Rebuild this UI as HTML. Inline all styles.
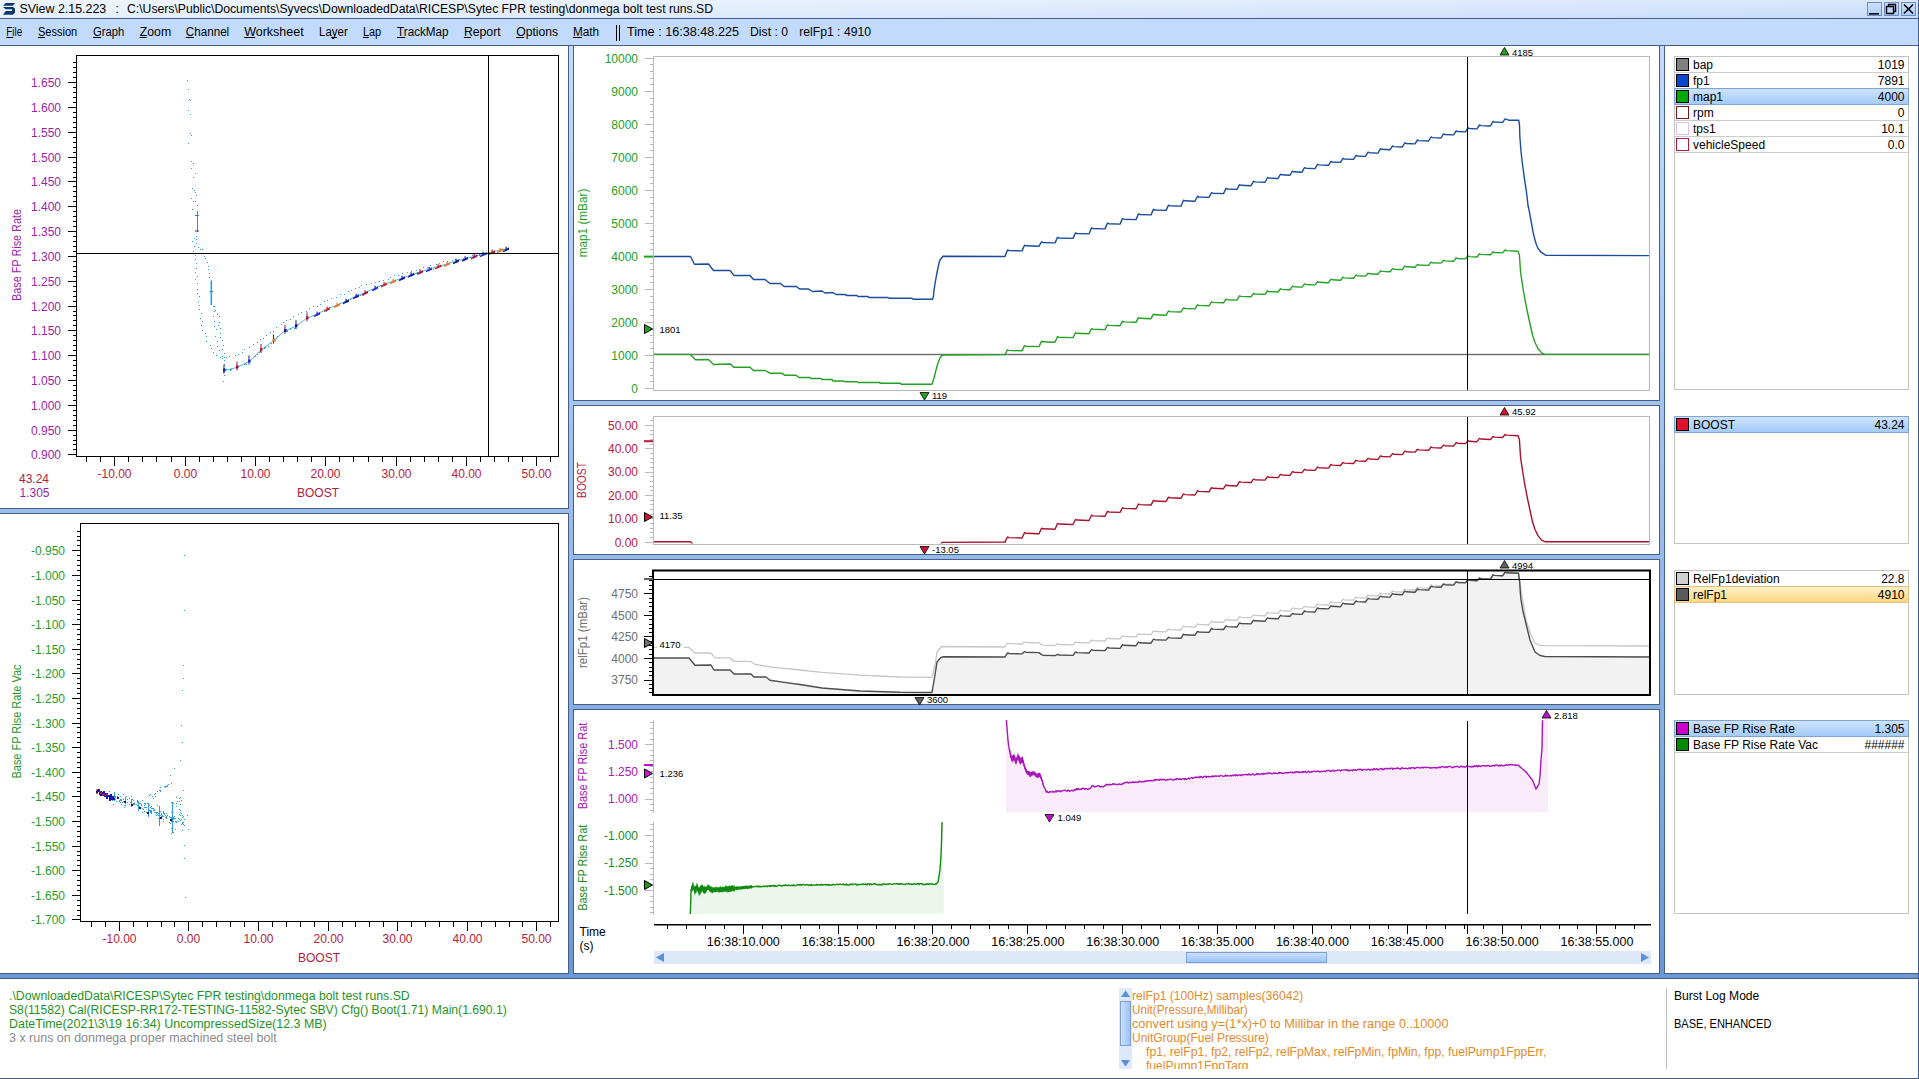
<!DOCTYPE html>
<html><head><meta charset="utf-8"><title>SView</title>
<style>
html,body{margin:0;padding:0;}
body{width:1919px;height:1079px;overflow:hidden;position:relative;
 background:linear-gradient(to bottom,#c6defd 0px,#c2dbfc 45px,#a4c4f0 400px,#88b0e2 706px,#6a98d5 978px,#6898d4 1079px);
 font-family:"Liberation Sans",sans-serif;font-size:12px;color:#000;}
.abs{position:absolute;}
.panel{position:absolute;background:#fff;border:1px solid #475d88;box-sizing:border-box;}
svg{position:absolute;left:0;top:0;overflow:hidden;}
svg text{font-family:"Liberation Sans",sans-serif;}
</style></head><body>

<div class="abs" style="left:0;top:0;width:1919px;height:18px;background:linear-gradient(to bottom,rgba(255,255,255,0.35),rgba(255,255,255,0)),linear-gradient(to right,#e6f0fd 0%,#dde9fc 40%,#c7dcfb 100%);"></div>
<div class="abs" style="left:0;top:18px;width:1919px;height:1px;background:#475d88;"></div>
<div class="abs" style="left:0;top:19px;width:1919px;height:26px;background:#c2dbfc;"></div>
<div class="abs" style="left:0;top:45px;width:1919px;height:1px;background:#475d88;"></div>
<div class="panel" style="left:-1px;top:45px;width:570px;height:464px;"></div>
<div class="panel" style="left:-1px;top:513px;width:570px;height:461px;"></div>
<div class="panel" style="left:573px;top:45px;width:1087px;height:356px;"></div>
<div class="panel" style="left:573px;top:405px;width:1087px;height:150px;"></div>
<div class="panel" style="left:573px;top:559px;width:1087px;height:146px;"></div>
<div class="panel" style="left:573px;top:709px;width:1087px;height:265px;"></div>
<div class="panel" style="left:1664px;top:45px;width:255px;height:929px;"></div>
<div class="panel" style="left:-1px;top:978px;width:1920px;height:101px;"></div>
<div class="abs" style="left:1918px;top:0;width:1px;height:1079px;background:#475d88;"></div>
<svg width="1919" height="1079" viewBox="0 0 1919 1079">
<path d="M3,5.8 L5.8,3 L15,3 L12.8,5.8 Z M3,6.9 L13,6.9 L15,8.6 L15,12.8 L12.8,14.7 L3,14.7 L5.8,10.9 L12,10.9 L12,9.2 L5.6,9.2 Z" fill="#0b3868"/>
<text x="19.5" y="13" fill="#000" font-size="12" text-anchor="start" textLength="86.7" lengthAdjust="spacingAndGlyphs">SView 2.15.223</text>
<text x="115.5" y="13" fill="#000" font-size="12" text-anchor="start" >:</text>
<text x="127" y="13" fill="#000" font-size="12" text-anchor="start" textLength="586" lengthAdjust="spacingAndGlyphs">C:\Users\Public\Documents\Syvecs\DownloadedData\RICESP\Sytec FPR testing\donmega bolt test runs.SD</text>
<text x="6.3" y="36" fill="#000" font-size="12" text-anchor="start" textLength="15.9" lengthAdjust="spacingAndGlyphs">File</text>
<rect x="6.3" y="37" width="7" height="1" fill="#000" />
<text x="38" y="36" fill="#000" font-size="12" text-anchor="start" textLength="39.2" lengthAdjust="spacingAndGlyphs">Session</text>
<rect x="38" y="37" width="7" height="1" fill="#000" />
<text x="93" y="36" fill="#000" font-size="12" text-anchor="start" textLength="31.2" lengthAdjust="spacingAndGlyphs">Graph</text>
<rect x="93" y="37" width="8" height="1" fill="#000" />
<text x="139.7" y="36" fill="#000" font-size="12" text-anchor="start" textLength="31.5" lengthAdjust="spacingAndGlyphs">Zoom</text>
<rect x="139.7" y="37" width="7" height="1" fill="#000" />
<text x="185.8" y="36" fill="#000" font-size="12" text-anchor="start" textLength="43.4" lengthAdjust="spacingAndGlyphs">Channel</text>
<rect x="185.8" y="37" width="8" height="1" fill="#000" />
<text x="244.2" y="36" fill="#000" font-size="12" text-anchor="start" textLength="59.5" lengthAdjust="spacingAndGlyphs">Worksheet</text>
<rect x="244.2" y="37" width="11" height="1" fill="#000" />
<text x="319.1" y="36" fill="#000" font-size="12" text-anchor="start" textLength="28.7" lengthAdjust="spacingAndGlyphs">Layer</text>
<rect x="331.1" y="37" width="6" height="1" fill="#000" />
<text x="362.9" y="36" fill="#000" font-size="12" text-anchor="start" textLength="18.2" lengthAdjust="spacingAndGlyphs">Lap</text>
<rect x="362.9" y="37" width="6" height="1" fill="#000" />
<text x="397.1" y="36" fill="#000" font-size="12" text-anchor="start" textLength="51.4" lengthAdjust="spacingAndGlyphs">TrackMap</text>
<rect x="397.1" y="37" width="8" height="1" fill="#000" />
<text x="463.9" y="36" fill="#000" font-size="12" text-anchor="start" textLength="36.8" lengthAdjust="spacingAndGlyphs">Report</text>
<rect x="463.9" y="37" width="7" height="1" fill="#000" />
<text x="516.2" y="36" fill="#000" font-size="12" text-anchor="start" textLength="42" lengthAdjust="spacingAndGlyphs">Options</text>
<rect x="516.2" y="37" width="8" height="1" fill="#000" />
<text x="572.9" y="36" fill="#000" font-size="12" text-anchor="start" textLength="26.2" lengthAdjust="spacingAndGlyphs">Math</text>
<rect x="572.9" y="37" width="9" height="1" fill="#000" />
<rect x="616" y="25" width="1" height="16" fill="#000" />
<rect x="619" y="25" width="1" height="16" fill="#000" />
<text x="627" y="36" fill="#000" font-size="12" text-anchor="start" textLength="112" lengthAdjust="spacingAndGlyphs">Time : 16:38:48.225</text>
<text x="750" y="36" fill="#000" font-size="12" text-anchor="start" textLength="38" lengthAdjust="spacingAndGlyphs">Dist : 0</text>
<text x="799.2" y="36" fill="#000" font-size="12" text-anchor="start" textLength="71.8" lengthAdjust="spacingAndGlyphs">relFp1 : 4910</text>
<rect x="1867.5" y="2.5" width="14" height="13" fill="url(#btng)" stroke="#6f8fc4" stroke-width="1"/>
<rect x="1884.5" y="2.5" width="14" height="13" fill="url(#btng)" stroke="#6f8fc4" stroke-width="1"/>
<rect x="1901.5" y="2.5" width="14" height="13" fill="url(#btng)" stroke="#6f8fc4" stroke-width="1"/>
<defs><linearGradient id="btng" x1="0" y1="0" x2="0" y2="1"><stop offset="0" stop-color="#cfe2fb"/><stop offset="1" stop-color="#a9ccf8"/></linearGradient></defs>
<rect x="1869" y="13" width="10" height="1.6" fill="#000" />
<path d="M1888.5,4.5 h7 v7 h-7 z" fill="none" stroke="#000" stroke-width="1.4"/><path d="M1886.5,6.5 h7 v7 h-7 z" fill="#bcd6fa" stroke="#000" stroke-width="1.4"/>
<path d="M1904,4.5 L1913,13.5 M1913,4.5 L1904,13.5" stroke="#000" stroke-width="1.6"/>
<rect x="76.5" y="55.5" width="482" height="401" fill="none" stroke="#000" stroke-width="1"/>
<rect x="68" y="454" width="8" height="1" fill="#000" />
<text x="61" y="458.5" fill="#9c1fa8" font-size="12" text-anchor="end" >0.900</text>
<rect x="68" y="430" width="8" height="1" fill="#000" />
<text x="61" y="434.5" fill="#9c1fa8" font-size="12" text-anchor="end" >0.950</text>
<rect x="68" y="405" width="8" height="1" fill="#000" />
<text x="61" y="409.5" fill="#9c1fa8" font-size="12" text-anchor="end" >1.000</text>
<rect x="68" y="380" width="8" height="1" fill="#000" />
<text x="61" y="384.5" fill="#9c1fa8" font-size="12" text-anchor="end" >1.050</text>
<rect x="68" y="355" width="8" height="1" fill="#000" />
<text x="61" y="359.5" fill="#9c1fa8" font-size="12" text-anchor="end" >1.100</text>
<rect x="68" y="330" width="8" height="1" fill="#000" />
<text x="61" y="334.5" fill="#9c1fa8" font-size="12" text-anchor="end" >1.150</text>
<rect x="68" y="306" width="8" height="1" fill="#000" />
<text x="61" y="310.5" fill="#9c1fa8" font-size="12" text-anchor="end" >1.200</text>
<rect x="68" y="281" width="8" height="1" fill="#000" />
<text x="61" y="285.5" fill="#9c1fa8" font-size="12" text-anchor="end" >1.250</text>
<rect x="68" y="256" width="8" height="1" fill="#000" />
<text x="61" y="260.5" fill="#9c1fa8" font-size="12" text-anchor="end" >1.300</text>
<rect x="68" y="231" width="8" height="1" fill="#000" />
<text x="61" y="235.5" fill="#9c1fa8" font-size="12" text-anchor="end" >1.350</text>
<rect x="68" y="206" width="8" height="1" fill="#000" />
<text x="61" y="210.5" fill="#9c1fa8" font-size="12" text-anchor="end" >1.400</text>
<rect x="68" y="181" width="8" height="1" fill="#000" />
<text x="61" y="185.5" fill="#9c1fa8" font-size="12" text-anchor="end" >1.450</text>
<rect x="68" y="157" width="8" height="1" fill="#000" />
<text x="61" y="161.5" fill="#9c1fa8" font-size="12" text-anchor="end" >1.500</text>
<rect x="68" y="132" width="8" height="1" fill="#000" />
<text x="61" y="136.5" fill="#9c1fa8" font-size="12" text-anchor="end" >1.550</text>
<rect x="68" y="107" width="8" height="1" fill="#000" />
<text x="61" y="111.5" fill="#9c1fa8" font-size="12" text-anchor="end" >1.600</text>
<rect x="68" y="82" width="8" height="1" fill="#000" />
<text x="61" y="86.5" fill="#9c1fa8" font-size="12" text-anchor="end" >1.650</text>
<rect x="73" y="449" width="3" height="1" fill="#000" />
<rect x="73" y="444" width="3" height="1" fill="#000" />
<rect x="73" y="440" width="3" height="1" fill="#000" />
<rect x="73" y="435" width="3" height="1" fill="#000" />
<rect x="73" y="425" width="3" height="1" fill="#000" />
<rect x="73" y="420" width="3" height="1" fill="#000" />
<rect x="73" y="415" width="3" height="1" fill="#000" />
<rect x="73" y="410" width="3" height="1" fill="#000" />
<rect x="73" y="400" width="3" height="1" fill="#000" />
<rect x="73" y="395" width="3" height="1" fill="#000" />
<rect x="73" y="390" width="3" height="1" fill="#000" />
<rect x="73" y="385" width="3" height="1" fill="#000" />
<rect x="73" y="375" width="3" height="1" fill="#000" />
<rect x="73" y="370" width="3" height="1" fill="#000" />
<rect x="73" y="365" width="3" height="1" fill="#000" />
<rect x="73" y="360" width="3" height="1" fill="#000" />
<rect x="73" y="350" width="3" height="1" fill="#000" />
<rect x="73" y="345" width="3" height="1" fill="#000" />
<rect x="73" y="340" width="3" height="1" fill="#000" />
<rect x="73" y="335" width="3" height="1" fill="#000" />
<rect x="73" y="325" width="3" height="1" fill="#000" />
<rect x="73" y="320" width="3" height="1" fill="#000" />
<rect x="73" y="315" width="3" height="1" fill="#000" />
<rect x="73" y="311" width="3" height="1" fill="#000" />
<rect x="73" y="301" width="3" height="1" fill="#000" />
<rect x="73" y="296" width="3" height="1" fill="#000" />
<rect x="73" y="291" width="3" height="1" fill="#000" />
<rect x="73" y="286" width="3" height="1" fill="#000" />
<rect x="73" y="276" width="3" height="1" fill="#000" />
<rect x="73" y="271" width="3" height="1" fill="#000" />
<rect x="73" y="266" width="3" height="1" fill="#000" />
<rect x="73" y="261" width="3" height="1" fill="#000" />
<rect x="73" y="251" width="3" height="1" fill="#000" />
<rect x="73" y="246" width="3" height="1" fill="#000" />
<rect x="73" y="241" width="3" height="1" fill="#000" />
<rect x="73" y="236" width="3" height="1" fill="#000" />
<rect x="73" y="226" width="3" height="1" fill="#000" />
<rect x="73" y="221" width="3" height="1" fill="#000" />
<rect x="73" y="216" width="3" height="1" fill="#000" />
<rect x="73" y="211" width="3" height="1" fill="#000" />
<rect x="73" y="201" width="3" height="1" fill="#000" />
<rect x="73" y="196" width="3" height="1" fill="#000" />
<rect x="73" y="191" width="3" height="1" fill="#000" />
<rect x="73" y="186" width="3" height="1" fill="#000" />
<rect x="73" y="177" width="3" height="1" fill="#000" />
<rect x="73" y="172" width="3" height="1" fill="#000" />
<rect x="73" y="167" width="3" height="1" fill="#000" />
<rect x="73" y="162" width="3" height="1" fill="#000" />
<rect x="73" y="152" width="3" height="1" fill="#000" />
<rect x="73" y="147" width="3" height="1" fill="#000" />
<rect x="73" y="142" width="3" height="1" fill="#000" />
<rect x="73" y="137" width="3" height="1" fill="#000" />
<rect x="73" y="127" width="3" height="1" fill="#000" />
<rect x="73" y="122" width="3" height="1" fill="#000" />
<rect x="73" y="117" width="3" height="1" fill="#000" />
<rect x="73" y="112" width="3" height="1" fill="#000" />
<rect x="73" y="102" width="3" height="1" fill="#000" />
<rect x="73" y="97" width="3" height="1" fill="#000" />
<rect x="73" y="92" width="3" height="1" fill="#000" />
<rect x="73" y="87" width="3" height="1" fill="#000" />
<rect x="73" y="77" width="3" height="1" fill="#000" />
<rect x="73" y="72" width="3" height="1" fill="#000" />
<rect x="73" y="67" width="3" height="1" fill="#000" />
<rect x="73" y="62" width="3" height="1" fill="#000" />
<rect x="114" y="457" width="1" height="9" fill="#000" />
<text x="114.5" y="477.7" fill="#b41c3c" font-size="12" text-anchor="middle" >-10.00</text>
<rect x="185" y="457" width="1" height="9" fill="#000" />
<text x="185.5" y="477.7" fill="#b41c3c" font-size="12" text-anchor="middle" >0.00</text>
<rect x="255" y="457" width="1" height="9" fill="#000" />
<text x="255.5" y="477.7" fill="#b41c3c" font-size="12" text-anchor="middle" >10.00</text>
<rect x="325" y="457" width="1" height="9" fill="#000" />
<text x="325.5" y="477.7" fill="#b41c3c" font-size="12" text-anchor="middle" >20.00</text>
<rect x="396" y="457" width="1" height="9" fill="#000" />
<text x="396.5" y="477.7" fill="#b41c3c" font-size="12" text-anchor="middle" >30.00</text>
<rect x="466" y="457" width="1" height="9" fill="#000" />
<text x="466.5" y="477.7" fill="#b41c3c" font-size="12" text-anchor="middle" >40.00</text>
<rect x="536" y="457" width="1" height="9" fill="#000" />
<text x="536.5" y="477.7" fill="#b41c3c" font-size="12" text-anchor="middle" >50.00</text>
<rect x="86" y="457" width="1" height="5" fill="#000" />
<rect x="100" y="457" width="1" height="5" fill="#000" />
<rect x="128" y="457" width="1" height="5" fill="#000" />
<rect x="142" y="457" width="1" height="5" fill="#000" />
<rect x="156" y="457" width="1" height="5" fill="#000" />
<rect x="171" y="457" width="1" height="5" fill="#000" />
<rect x="199" y="457" width="1" height="5" fill="#000" />
<rect x="213" y="457" width="1" height="5" fill="#000" />
<rect x="227" y="457" width="1" height="5" fill="#000" />
<rect x="241" y="457" width="1" height="5" fill="#000" />
<rect x="269" y="457" width="1" height="5" fill="#000" />
<rect x="283" y="457" width="1" height="5" fill="#000" />
<rect x="297" y="457" width="1" height="5" fill="#000" />
<rect x="311" y="457" width="1" height="5" fill="#000" />
<rect x="339" y="457" width="1" height="5" fill="#000" />
<rect x="353" y="457" width="1" height="5" fill="#000" />
<rect x="368" y="457" width="1" height="5" fill="#000" />
<rect x="382" y="457" width="1" height="5" fill="#000" />
<rect x="410" y="457" width="1" height="5" fill="#000" />
<rect x="424" y="457" width="1" height="5" fill="#000" />
<rect x="438" y="457" width="1" height="5" fill="#000" />
<rect x="452" y="457" width="1" height="5" fill="#000" />
<rect x="480" y="457" width="1" height="5" fill="#000" />
<rect x="494" y="457" width="1" height="5" fill="#000" />
<rect x="508" y="457" width="1" height="5" fill="#000" />
<rect x="522" y="457" width="1" height="5" fill="#000" />
<rect x="550" y="457" width="1" height="5" fill="#000" />
<text transform="translate(20.5,255) rotate(-90)" fill="#9c1fa8" font-size="12" text-anchor="middle" textLength="92" lengthAdjust="spacingAndGlyphs">Base FP Rise Rate</text>
<text x="318" y="497" fill="#b41c3c" font-size="12" text-anchor="middle" >BOOST</text>
<text x="19" y="483" fill="#b41c3c" font-size="12" text-anchor="start" >43.24</text>
<text x="19.5" y="496.5" fill="#9c1fa8" font-size="12" text-anchor="start" >1.305</text>
<rect x="187" y="80" width="1" height="1" fill="#2aa0d8"/>
<rect x="188" y="89" width="1" height="1" fill="#2aa0d8"/>
<rect x="189" y="99" width="1" height="1" fill="#2aa0d8"/>
<rect x="190" y="100" width="1" height="1" fill="#2aa0d8"/>
<rect x="188" y="110" width="1" height="1" fill="#2aa0d8"/>
<rect x="190" y="114" width="1" height="1" fill="#2aa0d8"/>
<rect x="190" y="133" width="1" height="1" fill="#2aa0d8"/>
<rect x="191" y="135" width="1" height="1" fill="#2aa0d8"/>
<rect x="188" y="143" width="1" height="1" fill="#2aa0d8"/>
<rect x="191" y="161" width="1" height="1" fill="#2aa0d8"/>
<rect x="193" y="163" width="1" height="1" fill="#2aa0d8"/>
<rect x="191" y="168" width="1" height="1" fill="#2aa0d8"/>
<rect x="195" y="173" width="1" height="1" fill="#2aa0d8"/>
<rect x="193" y="177" width="1" height="1" fill="#2aa0d8"/>
<rect x="192" y="188" width="1" height="1" fill="#2aa0d8"/>
<rect x="194" y="190" width="1" height="1" fill="#2aa0d8"/>
<rect x="195" y="192" width="1" height="1" fill="#2aa0d8"/>
<rect x="196" y="195" width="1" height="1" fill="#2aa0d8"/>
<rect x="191" y="198" width="1" height="1" fill="#2aa0d8"/>
<rect x="193" y="201" width="1" height="1" fill="#2aa0d8"/>
<rect x="195" y="201" width="1" height="1" fill="#2aa0d8"/>
<rect x="197" y="205" width="1" height="1" fill="#2aa0d8"/>
<rect x="192" y="209" width="1" height="1" fill="#2aa0d8"/>
<rect x="196" y="236" width="1" height="1" fill="#2aa0d8"/>
<rect x="196" y="239" width="1" height="1" fill="#2aa0d8"/>
<rect x="196" y="243" width="1" height="1" fill="#2aa0d8"/>
<rect x="198" y="247" width="1" height="1" fill="#2aa0d8"/>
<rect x="200" y="249" width="1" height="1" fill="#2aa0d8"/>
<rect x="202" y="249" width="1" height="1" fill="#2aa0d8"/>
<rect x="202" y="253" width="1" height="1" fill="#2aa0d8"/>
<rect x="204" y="256" width="1" height="1" fill="#2aa0d8"/>
<rect x="205" y="258" width="1" height="1" fill="#2aa0d8"/>
<rect x="207" y="262" width="1" height="1" fill="#2aa0d8"/>
<rect x="208" y="266" width="1" height="1" fill="#2aa0d8"/>
<rect x="208" y="269" width="1" height="1" fill="#2aa0d8"/>
<rect x="209" y="273" width="1" height="1" fill="#2aa0d8"/>
<rect x="209" y="277" width="1" height="1" fill="#2aa0d8"/>
<rect x="211" y="280" width="1" height="1" fill="#2aa0d8"/>
<rect x="214" y="306" width="1" height="1" fill="#2aa0d8"/>
<rect x="215" y="310" width="1" height="1" fill="#2aa0d8"/>
<rect x="217" y="314" width="1" height="1" fill="#2aa0d8"/>
<rect x="219" y="316" width="1" height="1" fill="#2aa0d8"/>
<rect x="219" y="322" width="1" height="1" fill="#2aa0d8"/>
<rect x="218" y="325" width="1" height="1" fill="#2aa0d8"/>
<rect x="220" y="328" width="1" height="1" fill="#2aa0d8"/>
<rect x="220" y="333" width="1" height="1" fill="#2aa0d8"/>
<rect x="220" y="337" width="1" height="1" fill="#2aa0d8"/>
<rect x="222" y="340" width="1" height="1" fill="#2aa0d8"/>
<rect x="223" y="345" width="1" height="1" fill="#2aa0d8"/>
<rect x="222" y="349" width="1" height="1" fill="#2aa0d8"/>
<rect x="224" y="353" width="1" height="1" fill="#2aa0d8"/>
<rect x="224" y="357" width="1" height="1" fill="#2aa0d8"/>
<rect x="224" y="360" width="1" height="1" fill="#2aa0d8"/>
<rect x="224" y="364" width="1" height="1" fill="#2aa0d8"/>
<rect x="224" y="368" width="1" height="1" fill="#2aa0d8"/>
<rect x="223" y="372" width="1" height="1" fill="#2aa0d8"/>
<rect x="224" y="375" width="1" height="1" fill="#2aa0d8"/>
<rect x="223" y="381" width="1" height="1" fill="#2aa0d8"/>
<rect x="194" y="238" width="1" height="1" fill="#2aa0d8"/>
<rect x="192" y="241" width="1" height="1" fill="#2aa0d8"/>
<rect x="194" y="246" width="1" height="1" fill="#2aa0d8"/>
<rect x="193" y="251" width="1" height="1" fill="#2aa0d8"/>
<rect x="195" y="255" width="1" height="1" fill="#2aa0d8"/>
<rect x="195" y="259" width="1" height="1" fill="#2aa0d8"/>
<rect x="196" y="263" width="1" height="1" fill="#2aa0d8"/>
<rect x="196" y="268" width="1" height="1" fill="#2aa0d8"/>
<rect x="195" y="272" width="1" height="1" fill="#2aa0d8"/>
<rect x="197" y="276" width="1" height="1" fill="#2aa0d8"/>
<rect x="195" y="279" width="1" height="1" fill="#2aa0d8"/>
<rect x="197" y="283" width="1" height="1" fill="#2aa0d8"/>
<rect x="197" y="289" width="1" height="1" fill="#2aa0d8"/>
<rect x="197" y="293" width="1" height="1" fill="#2aa0d8"/>
<rect x="199" y="296" width="1" height="1" fill="#2aa0d8"/>
<rect x="198" y="301" width="1" height="1" fill="#2aa0d8"/>
<rect x="199" y="305" width="1" height="1" fill="#2aa0d8"/>
<rect x="199" y="309" width="1" height="1" fill="#2aa0d8"/>
<rect x="201" y="313" width="1" height="1" fill="#2aa0d8"/>
<rect x="200" y="318" width="1" height="1" fill="#2aa0d8"/>
<rect x="202" y="321" width="1" height="1" fill="#2aa0d8"/>
<rect x="201" y="325" width="1" height="1" fill="#2aa0d8"/>
<rect x="202" y="330" width="1" height="1" fill="#2aa0d8"/>
<rect x="205" y="333" width="1" height="1" fill="#2aa0d8"/>
<rect x="206" y="336" width="1" height="1" fill="#2aa0d8"/>
<rect x="206" y="341" width="1" height="1" fill="#2aa0d8"/>
<rect x="210" y="345" width="1" height="1" fill="#2aa0d8"/>
<rect x="211" y="348" width="1" height="1" fill="#2aa0d8"/>
<rect x="213" y="352" width="1" height="1" fill="#2aa0d8"/>
<rect x="216" y="355" width="1" height="1" fill="#2aa0d8"/>
<rect x="220" y="357" width="1" height="1" fill="#2aa0d8"/>
<rect x="213" y="306" width="1" height="1" fill="#2aa0d8"/>
<rect x="214" y="311" width="1" height="1" fill="#2aa0d8"/>
<rect x="213" y="316" width="1" height="1" fill="#2aa0d8"/>
<rect x="214" y="321" width="1" height="1" fill="#2aa0d8"/>
<rect x="214" y="326" width="1" height="1" fill="#2aa0d8"/>
<rect x="216" y="329" width="1" height="1" fill="#2aa0d8"/>
<rect x="215" y="336" width="1" height="1" fill="#2aa0d8"/>
<rect x="217" y="341" width="1" height="1" fill="#2aa0d8"/>
<rect x="217" y="346" width="1" height="1" fill="#2aa0d8"/>
<rect x="219" y="350" width="1" height="1" fill="#2aa0d8"/>
<rect x="222" y="356" width="1" height="1" fill="#2aa0d8"/>
<rect x="222" y="358" width="1" height="1" fill="#2aa0d8"/>
<rect x="226" y="357" width="1" height="1" fill="#2aa0d8"/>
<rect x="229" y="356" width="1" height="1" fill="#2aa0d8"/>
<rect x="235" y="355" width="1" height="1" fill="#2aa0d8"/>
<rect x="238" y="354" width="1" height="1" fill="#2aa0d8"/>
<rect x="242" y="352" width="1" height="1" fill="#2aa0d8"/>
<rect x="244" y="349" width="1" height="1" fill="#2aa0d8"/>
<rect x="249" y="347" width="1" height="1" fill="#2aa0d8"/>
<rect x="253" y="344" width="1" height="1" fill="#2aa0d8"/>
<rect x="257" y="342" width="1" height="1" fill="#2aa0d8"/>
<rect x="260" y="339" width="1" height="1" fill="#2aa0d8"/>
<rect x="263" y="338" width="1" height="1" fill="#2aa0d8"/>
<rect x="266" y="335" width="1" height="1" fill="#2aa0d8"/>
<rect x="270" y="332" width="1" height="1" fill="#2aa0d8"/>
<rect x="273" y="331" width="1" height="1" fill="#2aa0d8"/>
<rect x="276" y="327" width="1" height="1" fill="#2aa0d8"/>
<rect x="281" y="324" width="1" height="1" fill="#2aa0d8"/>
<rect x="283" y="322" width="1" height="1" fill="#2aa0d8"/>
<rect x="286" y="320" width="1" height="1" fill="#2aa0d8"/>
<rect x="290" y="319" width="1" height="1" fill="#2aa0d8"/>
<rect x="293" y="316" width="1" height="1" fill="#2aa0d8"/>
<rect x="298" y="314" width="1" height="1" fill="#2aa0d8"/>
<rect x="301" y="312" width="1" height="1" fill="#2aa0d8"/>
<rect x="306" y="311" width="1" height="1" fill="#2aa0d8"/>
<rect x="309" y="308" width="1" height="1" fill="#2aa0d8"/>
<rect x="313" y="306" width="1" height="1" fill="#2aa0d8"/>
<rect x="317" y="306" width="1" height="1" fill="#2aa0d8"/>
<rect x="320" y="304" width="1" height="1" fill="#2aa0d8"/>
<rect x="324" y="301" width="1" height="1" fill="#2aa0d8"/>
<rect x="327" y="300" width="1" height="1" fill="#2aa0d8"/>
<rect x="331" y="298" width="1" height="1" fill="#2aa0d8"/>
<rect x="336" y="297" width="1" height="1" fill="#2aa0d8"/>
<rect x="340" y="294" width="1" height="1" fill="#2aa0d8"/>
<rect x="344" y="294" width="1" height="1" fill="#2aa0d8"/>
<rect x="348" y="291" width="1" height="1" fill="#2aa0d8"/>
<rect x="351" y="290" width="1" height="1" fill="#2aa0d8"/>
<rect x="355" y="288" width="1" height="1" fill="#2aa0d8"/>
<rect x="359" y="287" width="1" height="1" fill="#2aa0d8"/>
<rect x="361" y="285" width="1" height="1" fill="#2aa0d8"/>
<rect x="366" y="284" width="1" height="1" fill="#2aa0d8"/>
<rect x="371" y="283" width="1" height="1" fill="#2aa0d8"/>
<rect x="375" y="282" width="1" height="1" fill="#2aa0d8"/>
<rect x="379" y="281" width="1" height="1" fill="#2aa0d8"/>
<rect x="383" y="280" width="1" height="1" fill="#2aa0d8"/>
<rect x="388" y="279" width="1" height="1" fill="#2aa0d8"/>
<rect x="390" y="277" width="1" height="1" fill="#2aa0d8"/>
<rect x="394" y="275" width="1" height="1" fill="#2aa0d8"/>
<rect x="398" y="275" width="1" height="1" fill="#2aa0d8"/>
<rect x="402" y="273" width="1" height="1" fill="#2aa0d8"/>
<rect x="407" y="272" width="1" height="1" fill="#2aa0d8"/>
<rect x="411" y="271" width="1" height="1" fill="#2aa0d8"/>
<rect x="416" y="270" width="1" height="1" fill="#2aa0d8"/>
<rect x="419" y="269" width="1" height="1" fill="#2aa0d8"/>
<rect x="423" y="267" width="1" height="1" fill="#2aa0d8"/>
<rect x="427" y="267" width="1" height="1" fill="#2aa0d8"/>
<rect x="430" y="265" width="1" height="1" fill="#2aa0d8"/>
<rect x="436" y="264" width="1" height="1" fill="#2aa0d8"/>
<rect x="439" y="263" width="1" height="1" fill="#2aa0d8"/>
<rect x="443" y="261" width="1" height="1" fill="#2aa0d8"/>
<rect x="447" y="261" width="1" height="1" fill="#2aa0d8"/>
<rect x="452" y="260" width="1" height="1" fill="#2aa0d8"/>
<rect x="455" y="259" width="1" height="1" fill="#2aa0d8"/>
<rect x="459" y="259" width="1" height="1" fill="#2aa0d8"/>
<rect x="463" y="258" width="1" height="1" fill="#2aa0d8"/>
<rect x="467" y="257" width="1" height="1" fill="#2aa0d8"/>
<rect x="472" y="255" width="1" height="1" fill="#2aa0d8"/>
<rect x="477" y="255" width="1" height="1" fill="#2aa0d8"/>
<rect x="479" y="254" width="1" height="1" fill="#2aa0d8"/>
<rect x="484" y="253" width="1" height="1" fill="#2aa0d8"/>
<rect x="257" y="354" width="1" height="1" fill="#2aa0d8"/>
<rect x="287" y="331" width="1" height="1" fill="#2aa0d8"/>
<rect x="441" y="266" width="1" height="1" fill="#2aa0d8"/>
<rect x="420" y="272" width="1" height="1" fill="#2aa0d8"/>
<rect x="470" y="257" width="1" height="1" fill="#2aa0d8"/>
<rect x="490" y="253" width="1" height="1" fill="#2aa0d8"/>
<rect x="502" y="250" width="1" height="1" fill="#2aa0d8"/>
<rect x="338" y="304" width="1" height="1" fill="#2aa0d8"/>
<rect x="275" y="340" width="1" height="1" fill="#2aa0d8"/>
<rect x="230" y="369" width="1" height="1" fill="#2aa0d8"/>
<rect x="230" y="370" width="1" height="1" fill="#2aa0d8"/>
<rect x="363" y="295" width="1" height="1" fill="#2aa0d8"/>
<rect x="442" y="265" width="1" height="1" fill="#2aa0d8"/>
<rect x="294" y="328" width="1" height="1" fill="#2aa0d8"/>
<rect x="295" y="327" width="1" height="1" fill="#2aa0d8"/>
<rect x="479" y="255" width="1" height="1" fill="#2aa0d8"/>
<rect x="264" y="348" width="1" height="1" fill="#2aa0d8"/>
<rect x="416" y="273" width="1" height="1" fill="#2aa0d8"/>
<rect x="412" y="275" width="1" height="1" fill="#2aa0d8"/>
<rect x="486" y="252" width="1" height="1" fill="#2aa0d8"/>
<rect x="249" y="361" width="1" height="1" fill="#2aa0d8"/>
<rect x="463" y="259" width="1" height="1" fill="#2aa0d8"/>
<rect x="373" y="289" width="1" height="1" fill="#2aa0d8"/>
<rect x="259" y="352" width="1" height="1" fill="#2aa0d8"/>
<rect x="255" y="356" width="1" height="1" fill="#2aa0d8"/>
<rect x="276" y="338" width="1" height="1" fill="#2aa0d8"/>
<rect x="433" y="269" width="1" height="1" fill="#2aa0d8"/>
<rect x="271" y="343" width="1" height="1" fill="#2aa0d8"/>
<rect x="290" y="329" width="1" height="1" fill="#2aa0d8"/>
<rect x="373" y="290" width="1" height="1" fill="#2aa0d8"/>
<rect x="486" y="254" width="1" height="1" fill="#2aa0d8"/>
<rect x="338" y="304" width="1" height="1" fill="#2aa0d8"/>
<rect x="327" y="309" width="1" height="1" fill="#2aa0d8"/>
<rect x="499" y="251" width="1" height="1" fill="#2aa0d8"/>
<rect x="417" y="272" width="1" height="1" fill="#2aa0d8"/>
<rect x="315" y="315" width="1" height="1" fill="#2aa0d8"/>
<rect x="245" y="363" width="1" height="1" fill="#2aa0d8"/>
<rect x="268" y="346" width="1" height="1" fill="#2aa0d8"/>
<rect x="466" y="258" width="1" height="1" fill="#2aa0d8"/>
<rect x="286" y="331" width="1" height="1" fill="#2aa0d8"/>
<rect x="265" y="347" width="1" height="1" fill="#2aa0d8"/>
<rect x="494" y="252" width="1" height="1" fill="#2aa0d8"/>
<rect x="287" y="330" width="1" height="1" fill="#2aa0d8"/>
<rect x="318" y="314" width="1" height="1" fill="#2aa0d8"/>
<rect x="350" y="299" width="1" height="1" fill="#2aa0d8"/>
<rect x="360" y="295" width="1" height="1" fill="#2aa0d8"/>
<rect x="250" y="361" width="1" height="1" fill="#2aa0d8"/>
<rect x="231" y="369" width="1" height="1" fill="#2aa0d8"/>
<rect x="381" y="285" width="1" height="1" fill="#2aa0d8"/>
<rect x="403" y="277" width="1" height="1" fill="#2aa0d8"/>
<rect x="326" y="311" width="1" height="1" fill="#2aa0d8"/>
<rect x="264" y="347" width="1" height="1" fill="#2aa0d8"/>
<rect x="238" y="366" width="1" height="1" fill="#2aa0d8"/>
<rect x="394" y="280" width="1" height="1" fill="#2aa0d8"/>
<rect x="260" y="350" width="1" height="1" fill="#2aa0d8"/>
<rect x="456" y="260" width="1" height="1" fill="#2aa0d8"/>
<rect x="382" y="285" width="1" height="1" fill="#2aa0d8"/>
<rect x="414" y="274" width="1" height="1" fill="#2aa0d8"/>
<rect x="260" y="351" width="1" height="1" fill="#2aa0d8"/>
<rect x="455" y="261" width="1" height="1" fill="#2aa0d8"/>
<rect x="394" y="280" width="1" height="1" fill="#2aa0d8"/>
<rect x="226" y="369" width="1" height="1" fill="#2aa0d8"/>
<rect x="358" y="295" width="1" height="1" fill="#2aa0d8"/>
<rect x="244" y="364" width="1" height="1" fill="#2aa0d8"/>
<rect x="246" y="364" width="1" height="1" fill="#2aa0d8"/>
<rect x="277" y="336" width="1" height="1" fill="#2aa0d8"/>
<rect x="356" y="297" width="1" height="1" fill="#2aa0d8"/>
<rect x="411" y="274" width="1" height="1" fill="#2aa0d8"/>
<rect x="399" y="279" width="1" height="1" fill="#2aa0d8"/>
<rect x="290" y="328" width="1" height="1" fill="#2aa0d8"/>
<polyline points="224.6,370.5 237.2,367.4 249.8,361.1 260.9,350 273.5,340.6 284.5,331.1 295.6,326.4 306.6,318.5 317.6,313.8 327.1,309 336.5,305.3 346,301.2 355.5,296.4 364.9,292.7 377.5,287 387,283.2 399.6,279.1 412.2,274.4 428,269.6 443.7,264.9 459.5,260.2 475.3,256.1 487.9,252.9 505.2,249.2" fill="none" stroke="#2aa0d8" stroke-width="0.8"/>
<rect x="223.5" y="364.5" width="1" height="9" fill="#20208a" />
<rect x="223" y="368.5" width="2.5" height="3" fill="#1a1ab0" />
<rect x="236.5" y="361.45" width="1" height="9" fill="#7a1a5a" />
<rect x="236" y="365.45" width="2.5" height="3" fill="#a0183a" />
<rect x="248.5" y="355.5" width="1" height="9" fill="#20208a" />
<rect x="248" y="359.5" width="2.5" height="3" fill="#2a2ad8" />
<rect x="260.5" y="343.93" width="1" height="9" fill="#7a1a5a" />
<rect x="260" y="347.93" width="2.5" height="3" fill="#c02828" />
<rect x="273" y="334.6" width="1" height="9" fill="#20208a" />
<rect x="272.5" y="338.6" width="2.5" height="3" fill="#e07a20" />
<rect x="284.5" y="324.89" width="1" height="9" fill="#7a1a5a" />
<rect x="284" y="328.89" width="2.5" height="3" fill="#1a1a90" />
<rect x="295.5" y="320.11" width="1" height="9" fill="#20208a" />
<rect x="295" y="324.11" width="2.5" height="3" fill="#1a1ab0" />
<rect x="306.5" y="312.33" width="1" height="9" fill="#7a1a5a" />
<rect x="306" y="316.33" width="2.5" height="3" fill="#a0183a" />
<path d="M314,315.55636363636364 L320,312.05636363636364 L320,314.55636363636364 L314,317.05636363636364 Z" fill="#2a2ad8"/>
<rect x="316.5" y="311.56" width="1.2" height="4" fill="#2a2ad8" />
<path d="M324,310.5505263157895 L330,307.0505263157895 L330,309.5505263157895 L324,312.0505263157895 Z" fill="#c02828"/>
<rect x="326.5" y="306.55" width="1.2" height="4" fill="#c02828" />
<path d="M334,306.5842105263158 L340,303.0842105263158 L340,305.5842105263158 L334,308.0842105263158 Z" fill="#e07a20"/>
<rect x="336.5" y="302.58" width="1.2" height="4" fill="#e07a20" />
<path d="M343,302.7 L349,299.2 L349,301.7 L343,304.2 Z" fill="#1a1a90"/>
<rect x="345.5" y="298.7" width="1.2" height="4" fill="#1a1a90" />
<path d="M353,297.7031914893617 L359,294.2031914893617 L359,296.7031914893617 L353,299.2031914893617 Z" fill="#1a1ab0"/>
<rect x="355.5" y="293.7" width="1.2" height="4" fill="#1a1ab0" />
<path d="M362,294.15476190476187 L368,290.65476190476187 L368,293.15476190476187 L362,295.65476190476187 Z" fill="#a0183a"/>
<rect x="364.5" y="290.15" width="1.2" height="4" fill="#a0183a" />
<path d="M372,289.63095238095235 L378,286.13095238095235 L378,288.63095238095235 L372,291.13095238095235 Z" fill="#2a2ad8"/>
<rect x="374.5" y="285.63" width="1.2" height="4" fill="#2a2ad8" />
<path d="M381,285.9 L387,282.4 L387,284.9 L381,287.4 Z" fill="#c02828"/>
<rect x="383.5" y="281.9" width="1.2" height="4" fill="#c02828" />
<path d="M390,282.7476190476191 L396,279.2476190476191 L396,281.7476190476191 L390,284.2476190476191 Z" fill="#e07a20"/>
<rect x="392.5" y="278.75" width="1.2" height="4" fill="#e07a20" />
<path d="M399,279.70476190476194 L405,276.20476190476194 L405,278.70476190476194 L399,281.20476190476194 Z" fill="#1a1a90"/>
<rect x="401.5" y="275.7" width="1.2" height="4" fill="#1a1a90" />
<path d="M408,276.34761904761905 L414,272.84761904761905 L414,275.34761904761905 L408,277.84761904761905 Z" fill="#1a1ab0"/>
<rect x="410.5" y="272.35" width="1.2" height="4" fill="#1a1ab0" />
<path d="M417,273.5303797468354 L423,270.0303797468354 L423,272.5303797468354 L417,275.0303797468354 Z" fill="#a0183a"/>
<rect x="419.5" y="269.53" width="1.2" height="4" fill="#a0183a" />
<path d="M426,270.80063694267517 L432,267.30063694267517 L432,269.80063694267517 L426,272.30063694267517 Z" fill="#2a2ad8"/>
<rect x="428.5" y="266.8" width="1.2" height="4" fill="#2a2ad8" />
<path d="M435,268.1063694267516 L441,264.6063694267516 L441,267.1063694267516 L435,269.6063694267516 Z" fill="#c02828"/>
<rect x="437.5" y="264.11" width="1.2" height="4" fill="#c02828" />
<path d="M444,265.41835443037974 L450,261.91835443037974 L450,264.41835443037974 L444,266.91835443037974 Z" fill="#e07a20"/>
<rect x="446.5" y="261.42" width="1.2" height="4" fill="#e07a20" />
<path d="M453,262.7411392405063 L459,259.2411392405063 L459,261.7411392405063 L453,264.2411392405063 Z" fill="#1a1a90"/>
<rect x="455.5" y="258.74" width="1.2" height="4" fill="#1a1a90" />
<path d="M462,260.2727848101266 L468,256.7727848101266 L468,259.2727848101266 L462,261.7727848101266 Z" fill="#1a1ab0"/>
<rect x="464.5" y="256.27" width="1.2" height="4" fill="#1a1ab0" />
<path d="M471,257.9373417721519 L477,254.4373417721519 L477,256.9373417721519 L471,259.4373417721519 Z" fill="#a0183a"/>
<rect x="473.5" y="253.94" width="1.2" height="4" fill="#a0183a" />
<path d="M480,255.64444444444445 L486,252.14444444444445 L486,254.64444444444445 L480,257.14444444444445 Z" fill="#2a2ad8"/>
<rect x="482.5" y="251.64" width="1.2" height="4" fill="#2a2ad8" />
<path d="M489,253.52312138728323 L495,250.02312138728323 L495,252.52312138728323 L489,255.02312138728323 Z" fill="#c02828"/>
<rect x="491.5" y="249.52" width="1.2" height="4" fill="#c02828" />
<path d="M497,251.8121387283237 L503,248.3121387283237 L503,250.8121387283237 L497,253.3121387283237 Z" fill="#e07a20"/>
<rect x="499.5" y="247.81" width="1.2" height="4" fill="#e07a20" />
<path d="M503,250.7 L509,247.2 L509,249.7 L503,252.2 Z" fill="#1a1a90"/>
<rect x="505.5" y="246.7" width="1.2" height="4" fill="#1a1a90" />
<rect x="197" y="211" width="1" height="21" fill="#3a90d8" />
<rect x="195" y="215" width="4" height="1" fill="#2a7ad0" />
<rect x="195" y="230.5" width="4" height="1" fill="#1a3a90" />
<rect x="210.5" y="281" width="1.6" height="24" fill="#2aa0e0" />
<rect x="209.5" y="291" width="4" height="1.2" fill="#2aa0e0" />
<rect x="488" y="55" width="1" height="402" fill="#000" />
<rect x="76" y="253" width="483" height="1" fill="#000" />
<rect x="80.5" y="523.5" width="478" height="398" fill="none" stroke="#000" stroke-width="1"/>
<rect x="72" y="550" width="8" height="1" fill="#000" />
<text x="65" y="554.5" fill="#2a9a2a" font-size="12" text-anchor="end" >-0.950</text>
<rect x="72" y="575" width="8" height="1" fill="#000" />
<text x="65" y="579.5" fill="#2a9a2a" font-size="12" text-anchor="end" >-1.000</text>
<rect x="72" y="600" width="8" height="1" fill="#000" />
<text x="65" y="604.5" fill="#2a9a2a" font-size="12" text-anchor="end" >-1.050</text>
<rect x="72" y="624" width="8" height="1" fill="#000" />
<text x="65" y="628.5" fill="#2a9a2a" font-size="12" text-anchor="end" >-1.100</text>
<rect x="72" y="649" width="8" height="1" fill="#000" />
<text x="65" y="653.5" fill="#2a9a2a" font-size="12" text-anchor="end" >-1.150</text>
<rect x="72" y="673" width="8" height="1" fill="#000" />
<text x="65" y="677.5" fill="#2a9a2a" font-size="12" text-anchor="end" >-1.200</text>
<rect x="72" y="698" width="8" height="1" fill="#000" />
<text x="65" y="702.5" fill="#2a9a2a" font-size="12" text-anchor="end" >-1.250</text>
<rect x="72" y="723" width="8" height="1" fill="#000" />
<text x="65" y="727.5" fill="#2a9a2a" font-size="12" text-anchor="end" >-1.300</text>
<rect x="72" y="747" width="8" height="1" fill="#000" />
<text x="65" y="751.5" fill="#2a9a2a" font-size="12" text-anchor="end" >-1.350</text>
<rect x="72" y="772" width="8" height="1" fill="#000" />
<text x="65" y="776.5" fill="#2a9a2a" font-size="12" text-anchor="end" >-1.400</text>
<rect x="72" y="796" width="8" height="1" fill="#000" />
<text x="65" y="800.5" fill="#2a9a2a" font-size="12" text-anchor="end" >-1.450</text>
<rect x="72" y="821" width="8" height="1" fill="#000" />
<text x="65" y="825.5" fill="#2a9a2a" font-size="12" text-anchor="end" >-1.500</text>
<rect x="72" y="846" width="8" height="1" fill="#000" />
<text x="65" y="850.5" fill="#2a9a2a" font-size="12" text-anchor="end" >-1.550</text>
<rect x="72" y="870" width="8" height="1" fill="#000" />
<text x="65" y="874.5" fill="#2a9a2a" font-size="12" text-anchor="end" >-1.600</text>
<rect x="72" y="895" width="8" height="1" fill="#000" />
<text x="65" y="899.5" fill="#2a9a2a" font-size="12" text-anchor="end" >-1.650</text>
<rect x="72" y="919" width="8" height="1" fill="#000" />
<text x="65" y="923.5" fill="#2a9a2a" font-size="12" text-anchor="end" >-1.700</text>
<rect x="77" y="531" width="3" height="1" fill="#000" />
<rect x="77" y="536" width="3" height="1" fill="#000" />
<rect x="77" y="540" width="3" height="1" fill="#000" />
<rect x="77" y="545" width="3" height="1" fill="#000" />
<rect x="77" y="555" width="3" height="1" fill="#000" />
<rect x="77" y="560" width="3" height="1" fill="#000" />
<rect x="77" y="565" width="3" height="1" fill="#000" />
<rect x="77" y="570" width="3" height="1" fill="#000" />
<rect x="77" y="580" width="3" height="1" fill="#000" />
<rect x="77" y="585" width="3" height="1" fill="#000" />
<rect x="77" y="590" width="3" height="1" fill="#000" />
<rect x="77" y="595" width="3" height="1" fill="#000" />
<rect x="77" y="604" width="3" height="1" fill="#000" />
<rect x="77" y="609" width="3" height="1" fill="#000" />
<rect x="77" y="614" width="3" height="1" fill="#000" />
<rect x="77" y="619" width="3" height="1" fill="#000" />
<rect x="77" y="629" width="3" height="1" fill="#000" />
<rect x="77" y="634" width="3" height="1" fill="#000" />
<rect x="77" y="639" width="3" height="1" fill="#000" />
<rect x="77" y="644" width="3" height="1" fill="#000" />
<rect x="77" y="654" width="3" height="1" fill="#000" />
<rect x="77" y="659" width="3" height="1" fill="#000" />
<rect x="77" y="664" width="3" height="1" fill="#000" />
<rect x="77" y="668" width="3" height="1" fill="#000" />
<rect x="77" y="678" width="3" height="1" fill="#000" />
<rect x="77" y="683" width="3" height="1" fill="#000" />
<rect x="77" y="688" width="3" height="1" fill="#000" />
<rect x="77" y="693" width="3" height="1" fill="#000" />
<rect x="77" y="703" width="3" height="1" fill="#000" />
<rect x="77" y="708" width="3" height="1" fill="#000" />
<rect x="77" y="713" width="3" height="1" fill="#000" />
<rect x="77" y="718" width="3" height="1" fill="#000" />
<rect x="77" y="727" width="3" height="1" fill="#000" />
<rect x="77" y="732" width="3" height="1" fill="#000" />
<rect x="77" y="737" width="3" height="1" fill="#000" />
<rect x="77" y="742" width="3" height="1" fill="#000" />
<rect x="77" y="752" width="3" height="1" fill="#000" />
<rect x="77" y="757" width="3" height="1" fill="#000" />
<rect x="77" y="762" width="3" height="1" fill="#000" />
<rect x="77" y="767" width="3" height="1" fill="#000" />
<rect x="77" y="777" width="3" height="1" fill="#000" />
<rect x="77" y="782" width="3" height="1" fill="#000" />
<rect x="77" y="787" width="3" height="1" fill="#000" />
<rect x="77" y="791" width="3" height="1" fill="#000" />
<rect x="77" y="801" width="3" height="1" fill="#000" />
<rect x="77" y="806" width="3" height="1" fill="#000" />
<rect x="77" y="811" width="3" height="1" fill="#000" />
<rect x="77" y="816" width="3" height="1" fill="#000" />
<rect x="77" y="826" width="3" height="1" fill="#000" />
<rect x="77" y="831" width="3" height="1" fill="#000" />
<rect x="77" y="836" width="3" height="1" fill="#000" />
<rect x="77" y="841" width="3" height="1" fill="#000" />
<rect x="77" y="851" width="3" height="1" fill="#000" />
<rect x="77" y="855" width="3" height="1" fill="#000" />
<rect x="77" y="860" width="3" height="1" fill="#000" />
<rect x="77" y="865" width="3" height="1" fill="#000" />
<rect x="77" y="875" width="3" height="1" fill="#000" />
<rect x="77" y="880" width="3" height="1" fill="#000" />
<rect x="77" y="885" width="3" height="1" fill="#000" />
<rect x="77" y="890" width="3" height="1" fill="#000" />
<rect x="77" y="900" width="3" height="1" fill="#000" />
<rect x="77" y="905" width="3" height="1" fill="#000" />
<rect x="77" y="910" width="3" height="1" fill="#000" />
<rect x="77" y="915" width="3" height="1" fill="#000" />
<rect x="119" y="922" width="1" height="9" fill="#000" />
<text x="119.5" y="942.5" fill="#b41c3c" font-size="12" text-anchor="middle" >-10.00</text>
<rect x="188" y="922" width="1" height="9" fill="#000" />
<text x="188.5" y="942.5" fill="#b41c3c" font-size="12" text-anchor="middle" >0.00</text>
<rect x="258" y="922" width="1" height="9" fill="#000" />
<text x="258.5" y="942.5" fill="#b41c3c" font-size="12" text-anchor="middle" >10.00</text>
<rect x="328" y="922" width="1" height="9" fill="#000" />
<text x="328.5" y="942.5" fill="#b41c3c" font-size="12" text-anchor="middle" >20.00</text>
<rect x="397" y="922" width="1" height="9" fill="#000" />
<text x="397.5" y="942.5" fill="#b41c3c" font-size="12" text-anchor="middle" >30.00</text>
<rect x="467" y="922" width="1" height="9" fill="#000" />
<text x="467.5" y="942.5" fill="#b41c3c" font-size="12" text-anchor="middle" >40.00</text>
<rect x="536" y="922" width="1" height="9" fill="#000" />
<text x="536.5" y="942.5" fill="#b41c3c" font-size="12" text-anchor="middle" >50.00</text>
<rect x="91" y="922" width="1" height="5" fill="#000" />
<rect x="105" y="922" width="1" height="5" fill="#000" />
<rect x="133" y="922" width="1" height="5" fill="#000" />
<rect x="147" y="922" width="1" height="5" fill="#000" />
<rect x="161" y="922" width="1" height="5" fill="#000" />
<rect x="174" y="922" width="1" height="5" fill="#000" />
<rect x="202" y="922" width="1" height="5" fill="#000" />
<rect x="216" y="922" width="1" height="5" fill="#000" />
<rect x="230" y="922" width="1" height="5" fill="#000" />
<rect x="244" y="922" width="1" height="5" fill="#000" />
<rect x="272" y="922" width="1" height="5" fill="#000" />
<rect x="286" y="922" width="1" height="5" fill="#000" />
<rect x="300" y="922" width="1" height="5" fill="#000" />
<rect x="314" y="922" width="1" height="5" fill="#000" />
<rect x="342" y="922" width="1" height="5" fill="#000" />
<rect x="355" y="922" width="1" height="5" fill="#000" />
<rect x="369" y="922" width="1" height="5" fill="#000" />
<rect x="383" y="922" width="1" height="5" fill="#000" />
<rect x="411" y="922" width="1" height="5" fill="#000" />
<rect x="425" y="922" width="1" height="5" fill="#000" />
<rect x="439" y="922" width="1" height="5" fill="#000" />
<rect x="453" y="922" width="1" height="5" fill="#000" />
<rect x="481" y="922" width="1" height="5" fill="#000" />
<rect x="495" y="922" width="1" height="5" fill="#000" />
<rect x="509" y="922" width="1" height="5" fill="#000" />
<rect x="522" y="922" width="1" height="5" fill="#000" />
<rect x="550" y="922" width="1" height="5" fill="#000" />
<text transform="translate(20.5,721.5) rotate(-90)" fill="#2a9a2a" font-size="12" text-anchor="middle" textLength="114" lengthAdjust="spacingAndGlyphs">Base FP Rise Rate Vac</text>
<text x="319" y="962" fill="#b41c3c" font-size="12" text-anchor="middle" >BOOST</text>
<rect x="184" y="555" width="1" height="1" fill="#2aa0d8"/>
<rect x="184" y="610" width="1" height="1" fill="#2aa0d8"/>
<rect x="183" y="665" width="1" height="1" fill="#2aa0d8"/>
<rect x="183" y="678" width="1" height="1" fill="#2aa0d8"/>
<rect x="182" y="690" width="1" height="1" fill="#2aa0d8"/>
<rect x="181" y="725" width="1" height="1" fill="#2aa0d8"/>
<rect x="182" y="742" width="1" height="1" fill="#2aa0d8"/>
<rect x="180" y="760" width="1" height="1" fill="#2aa0d8"/>
<rect x="183" y="790" width="1" height="1" fill="#2aa0d8"/>
<rect x="184" y="845" width="1" height="1" fill="#2aa0d8"/>
<rect x="184" y="858" width="1" height="1" fill="#2aa0d8"/>
<rect x="185" y="897" width="1" height="1" fill="#2aa0d8"/>
<rect x="136" y="804" width="1" height="1" fill="#2aa0d8"/>
<rect x="139" y="806" width="1" height="1" fill="#2aa0d8"/>
<rect x="119" y="800" width="1" height="1" fill="#2aa0d8"/>
<rect x="166" y="817" width="1" height="1" fill="#2aa0d8"/>
<rect x="118" y="794" width="1" height="1" fill="#2aa0d8"/>
<rect x="120" y="796" width="1" height="1" fill="#2aa0d8"/>
<rect x="154" y="810" width="1" height="1" fill="#2aa0d8"/>
<rect x="110" y="796" width="1" height="1" fill="#2aa0d8"/>
<rect x="123" y="801" width="1" height="1" fill="#2aa0d8"/>
<rect x="138" y="808" width="1" height="1" fill="#2aa0d8"/>
<rect x="144" y="805" width="1" height="1" fill="#2aa0d8"/>
<rect x="154" y="812" width="1" height="1" fill="#2aa0d8"/>
<rect x="183" y="822" width="1" height="1" fill="#2aa0d8"/>
<rect x="158" y="815" width="1" height="1" fill="#2aa0d8"/>
<rect x="134" y="804" width="1" height="1" fill="#2aa0d8"/>
<rect x="139" y="803" width="1" height="1" fill="#2aa0d8"/>
<rect x="175" y="821" width="1" height="1" fill="#2aa0d8"/>
<rect x="127" y="799" width="1" height="1" fill="#2aa0d8"/>
<rect x="176" y="822" width="1" height="1" fill="#2aa0d8"/>
<rect x="154" y="809" width="1" height="1" fill="#2aa0d8"/>
<rect x="113" y="804" width="1" height="1" fill="#2aa0d8"/>
<rect x="163" y="816" width="1" height="1" fill="#2aa0d8"/>
<rect x="121" y="800" width="1" height="1" fill="#2aa0d8"/>
<rect x="120" y="799" width="1" height="1" fill="#2aa0d8"/>
<rect x="123" y="799" width="1" height="1" fill="#2aa0d8"/>
<rect x="156" y="813" width="1" height="1" fill="#2aa0d8"/>
<rect x="124" y="807" width="1" height="1" fill="#2aa0d8"/>
<rect x="163" y="821" width="1" height="1" fill="#2aa0d8"/>
<rect x="121" y="804" width="1" height="1" fill="#2aa0d8"/>
<rect x="161" y="816" width="1" height="1" fill="#2aa0d8"/>
<rect x="125" y="805" width="1" height="1" fill="#2aa0d8"/>
<rect x="133" y="804" width="1" height="1" fill="#2aa0d8"/>
<rect x="115" y="797" width="1" height="1" fill="#2aa0d8"/>
<rect x="150" y="812" width="1" height="1" fill="#2aa0d8"/>
<rect x="172" y="821" width="1" height="1" fill="#2aa0d8"/>
<rect x="170" y="819" width="1" height="1" fill="#2aa0d8"/>
<rect x="173" y="817" width="1" height="1" fill="#2aa0d8"/>
<rect x="123" y="794" width="1" height="1" fill="#2aa0d8"/>
<rect x="129" y="798" width="1" height="1" fill="#2aa0d8"/>
<rect x="151" y="810" width="1" height="1" fill="#2aa0d8"/>
<rect x="115" y="796" width="1" height="1" fill="#2aa0d8"/>
<rect x="158" y="818" width="1" height="1" fill="#2aa0d8"/>
<rect x="151" y="811" width="1" height="1" fill="#2aa0d8"/>
<rect x="161" y="814" width="1" height="1" fill="#2aa0d8"/>
<rect x="151" y="806" width="1" height="1" fill="#2aa0d8"/>
<rect x="131" y="801" width="1" height="1" fill="#2aa0d8"/>
<rect x="111" y="799" width="1" height="1" fill="#2aa0d8"/>
<rect x="115" y="799" width="1" height="1" fill="#2aa0d8"/>
<rect x="151" y="811" width="1" height="1" fill="#2aa0d8"/>
<rect x="175" y="818" width="1" height="1" fill="#2aa0d8"/>
<rect x="156" y="812" width="1" height="1" fill="#2aa0d8"/>
<rect x="118" y="797" width="1" height="1" fill="#2aa0d8"/>
<rect x="159" y="813" width="1" height="1" fill="#2aa0d8"/>
<rect x="150" y="811" width="1" height="1" fill="#2aa0d8"/>
<rect x="133" y="803" width="1" height="1" fill="#2aa0d8"/>
<rect x="147" y="803" width="1" height="1" fill="#2aa0d8"/>
<rect x="159" y="810" width="1" height="1" fill="#2aa0d8"/>
<rect x="170" y="823" width="1" height="1" fill="#2aa0d8"/>
<rect x="173" y="817" width="1" height="1" fill="#2aa0d8"/>
<rect x="166" y="813" width="1" height="1" fill="#2aa0d8"/>
<rect x="151" y="813" width="1" height="1" fill="#2aa0d8"/>
<rect x="155" y="812" width="1" height="1" fill="#2aa0d8"/>
<rect x="181" y="819" width="1" height="1" fill="#2aa0d8"/>
<rect x="137" y="801" width="1" height="1" fill="#2aa0d8"/>
<rect x="141" y="805" width="1" height="1" fill="#2aa0d8"/>
<rect x="165" y="815" width="1" height="1" fill="#2aa0d8"/>
<rect x="144" y="811" width="1" height="1" fill="#2aa0d8"/>
<rect x="140" y="803" width="1" height="1" fill="#2aa0d8"/>
<rect x="130" y="802" width="1" height="1" fill="#2aa0d8"/>
<rect x="157" y="814" width="1" height="1" fill="#2aa0d8"/>
<rect x="170" y="817" width="1" height="1" fill="#2aa0d8"/>
<rect x="169" y="822" width="1" height="1" fill="#2aa0d8"/>
<rect x="120" y="802" width="1" height="1" fill="#2aa0d8"/>
<rect x="174" y="818" width="1" height="1" fill="#2aa0d8"/>
<rect x="150" y="810" width="1" height="1" fill="#2aa0d8"/>
<rect x="147" y="803" width="1" height="1" fill="#2aa0d8"/>
<rect x="161" y="813" width="1" height="1" fill="#2aa0d8"/>
<rect x="120" y="800" width="1" height="1" fill="#2aa0d8"/>
<rect x="122" y="802" width="1" height="1" fill="#2aa0d8"/>
<rect x="142" y="812" width="1" height="1" fill="#2aa0d8"/>
<rect x="176" y="822" width="1" height="1" fill="#2aa0d8"/>
<rect x="113" y="796" width="1" height="1" fill="#2aa0d8"/>
<rect x="157" y="812" width="1" height="1" fill="#2aa0d8"/>
<rect x="166" y="816" width="1" height="1" fill="#2aa0d8"/>
<rect x="146" y="807" width="1" height="1" fill="#2aa0d8"/>
<rect x="127" y="802" width="1" height="1" fill="#2aa0d8"/>
<rect x="150" y="812" width="1" height="1" fill="#2aa0d8"/>
<rect x="157" y="805" width="1" height="1" fill="#2aa0d8"/>
<rect x="158" y="815" width="1" height="1" fill="#2aa0d8"/>
<rect x="125" y="800" width="1" height="1" fill="#2aa0d8"/>
<rect x="160" y="815" width="1" height="1" fill="#2aa0d8"/>
<rect x="133" y="800" width="1" height="1" fill="#2aa0d8"/>
<rect x="153" y="808" width="1" height="1" fill="#2aa0d8"/>
<rect x="165" y="815" width="1" height="1" fill="#2aa0d8"/>
<rect x="173" y="819" width="1" height="1" fill="#2aa0d8"/>
<rect x="137" y="802" width="1" height="1" fill="#2aa0d8"/>
<rect x="131" y="802" width="1" height="1" fill="#2aa0d8"/>
<rect x="167" y="815" width="1" height="1" fill="#2aa0d8"/>
<rect x="156" y="815" width="1" height="1" fill="#2aa0d8"/>
<rect x="163" y="813" width="1" height="1" fill="#2aa0d8"/>
<rect x="131" y="796" width="1" height="1" fill="#2aa0d8"/>
<rect x="172" y="820" width="1" height="1" fill="#2aa0d8"/>
<rect x="137" y="800" width="1" height="1" fill="#2aa0d8"/>
<rect x="137" y="805" width="1" height="1" fill="#2aa0d8"/>
<rect x="149" y="805" width="1" height="1" fill="#2aa0d8"/>
<rect x="112" y="796" width="1" height="1" fill="#2aa0d8"/>
<rect x="166" y="818" width="1" height="1" fill="#2aa0d8"/>
<rect x="165" y="817" width="1" height="1" fill="#2aa0d8"/>
<rect x="145" y="803" width="1" height="1" fill="#2aa0d8"/>
<rect x="160" y="811" width="1" height="1" fill="#2aa0d8"/>
<rect x="176" y="821" width="1" height="1" fill="#2aa0d8"/>
<rect x="146" y="812" width="1" height="1" fill="#2aa0d8"/>
<rect x="149" y="810" width="1" height="1" fill="#2aa0d8"/>
<rect x="148" y="811" width="1" height="1" fill="#2aa0d8"/>
<rect x="169" y="816" width="1" height="1" fill="#2aa0d8"/>
<rect x="171" y="817" width="1" height="1" fill="#2aa0d8"/>
<rect x="151" y="812" width="1" height="1" fill="#2aa0d8"/>
<rect x="144" y="807" width="1" height="1" fill="#2aa0d8"/>
<rect x="173" y="821" width="1" height="1" fill="#2aa0d8"/>
<rect x="162" y="815" width="1" height="1" fill="#2aa0d8"/>
<rect x="161" y="814" width="1" height="1" fill="#2aa0d8"/>
<rect x="144" y="803" width="1" height="1" fill="#2aa0d8"/>
<rect x="127" y="802" width="1" height="1" fill="#2aa0d8"/>
<rect x="142" y="800" width="1" height="1" fill="#2aa0d8"/>
<rect x="142" y="808" width="1" height="1" fill="#2aa0d8"/>
<rect x="154" y="810" width="1" height="1" fill="#2aa0d8"/>
<rect x="165" y="815" width="1" height="1" fill="#2aa0d8"/>
<rect x="125" y="799" width="1" height="1" fill="#2aa0d8"/>
<rect x="134" y="803" width="1" height="1" fill="#2aa0d8"/>
<rect x="162" y="816" width="1" height="1" fill="#2aa0d8"/>
<rect x="129" y="804" width="1" height="1" fill="#2aa0d8"/>
<rect x="138" y="808" width="1" height="1" fill="#2aa0d8"/>
<rect x="148" y="809" width="1" height="1" fill="#2aa0d8"/>
<rect x="152" y="808" width="1" height="1" fill="#2aa0d8"/>
<rect x="164" y="814" width="1" height="1" fill="#2aa0d8"/>
<rect x="126" y="796" width="1" height="1" fill="#2aa0d8"/>
<rect x="171" y="821" width="1" height="1" fill="#2aa0d8"/>
<rect x="175" y="829" width="1" height="1" fill="#2aa0d8"/>
<rect x="172" y="820" width="1" height="1" fill="#2aa0d8"/>
<rect x="160" y="815" width="1" height="1" fill="#2aa0d8"/>
<rect x="163" y="819" width="1" height="1" fill="#2aa0d8"/>
<rect x="116" y="801" width="1" height="1" fill="#2aa0d8"/>
<rect x="112" y="800" width="1" height="1" fill="#2aa0d8"/>
<rect x="173" y="819" width="1" height="1" fill="#2aa0d8"/>
<rect x="145" y="804" width="1" height="1" fill="#2aa0d8"/>
<rect x="158" y="813" width="1" height="1" fill="#2aa0d8"/>
<rect x="121" y="799" width="1" height="1" fill="#2aa0d8"/>
<rect x="144" y="807" width="1" height="1" fill="#2aa0d8"/>
<rect x="124" y="805" width="1" height="1" fill="#2aa0d8"/>
<rect x="178" y="821" width="1" height="1" fill="#2aa0d8"/>
<rect x="117" y="796" width="1" height="1" fill="#2aa0d8"/>
<rect x="161" y="817" width="1" height="1" fill="#2aa0d8"/>
<rect x="143" y="809" width="1" height="1" fill="#2aa0d8"/>
<rect x="109" y="791" width="1" height="1" fill="#2aa0d8"/>
<rect x="119" y="801" width="1" height="1" fill="#2aa0d8"/>
<rect x="139" y="806" width="1" height="1" fill="#2aa0d8"/>
<rect x="151" y="808" width="1" height="1" fill="#2aa0d8"/>
<rect x="163" y="811" width="1" height="1" fill="#2aa0d8"/>
<rect x="151" y="813" width="1" height="1" fill="#2aa0d8"/>
<rect x="150" y="807" width="1" height="1" fill="#2aa0d8"/>
<rect x="132" y="799" width="1" height="1" fill="#2aa0d8"/>
<rect x="164" y="813" width="1" height="1" fill="#2aa0d8"/>
<rect x="174" y="816" width="1" height="1" fill="#2aa0d8"/>
<rect x="163" y="812" width="1" height="1" fill="#2aa0d8"/>
<rect x="162" y="815" width="1" height="1" fill="#2aa0d8"/>
<rect x="145" y="807" width="1" height="1" fill="#2aa0d8"/>
<rect x="153" y="810" width="1" height="1" fill="#2aa0d8"/>
<rect x="173" y="818" width="1" height="1" fill="#2aa0d8"/>
<rect x="153" y="810" width="1" height="1" fill="#2aa0d8"/>
<rect x="141" y="804" width="1" height="1" fill="#2aa0d8"/>
<rect x="170" y="775" width="1" height="1" fill="#2aa0d8"/>
<rect x="149" y="795" width="1" height="1" fill="#2aa0d8"/>
<rect x="157" y="791" width="1" height="1" fill="#2aa0d8"/>
<rect x="155" y="793" width="1" height="1" fill="#2aa0d8"/>
<rect x="159" y="790" width="1" height="1" fill="#2aa0d8"/>
<rect x="167" y="785" width="1" height="1" fill="#2aa0d8"/>
<rect x="174" y="768" width="1" height="1" fill="#2aa0d8"/>
<rect x="150" y="794" width="1" height="1" fill="#2aa0d8"/>
<rect x="152" y="796" width="1" height="1" fill="#2aa0d8"/>
<rect x="165" y="787" width="1" height="1" fill="#2aa0d8"/>
<rect x="171" y="783" width="1" height="1" fill="#2aa0d8"/>
<rect x="160" y="787" width="1" height="1" fill="#2aa0d8"/>
<rect x="160" y="791" width="1" height="1" fill="#2aa0d8"/>
<rect x="166" y="786" width="1" height="1" fill="#2aa0d8"/>
<rect x="160" y="790" width="1" height="1" fill="#2aa0d8"/>
<rect x="153" y="798" width="1" height="1" fill="#2aa0d8"/>
<rect x="164" y="786" width="1" height="1" fill="#2aa0d8"/>
<rect x="155" y="796" width="1" height="1" fill="#2aa0d8"/>
<rect x="154" y="794" width="1" height="1" fill="#2aa0d8"/>
<rect x="165" y="786" width="1" height="1" fill="#2aa0d8"/>
<rect x="168" y="784" width="1" height="1" fill="#2aa0d8"/>
<rect x="167" y="786" width="1" height="1" fill="#2aa0d8"/>
<rect x="184" y="819" width="1" height="1" fill="#2aa0d8"/>
<rect x="181" y="813" width="1" height="1" fill="#2aa0d8"/>
<rect x="183" y="816" width="1" height="1" fill="#2aa0d8"/>
<rect x="180" y="820" width="1" height="1" fill="#2aa0d8"/>
<rect x="178" y="818" width="1" height="1" fill="#2aa0d8"/>
<rect x="187" y="815" width="1" height="1" fill="#2aa0d8"/>
<rect x="182" y="823" width="1" height="1" fill="#2aa0d8"/>
<rect x="184" y="825" width="1" height="1" fill="#2aa0d8"/>
<rect x="180" y="812" width="1" height="1" fill="#2aa0d8"/>
<rect x="179" y="814" width="1" height="1" fill="#2aa0d8"/>
<rect x="183" y="824" width="1" height="1" fill="#2aa0d8"/>
<rect x="188" y="829" width="1" height="1" fill="#2aa0d8"/>
<rect x="180" y="797" width="1" height="1" fill="#2aa0d8"/>
<rect x="180" y="810" width="1" height="1" fill="#2aa0d8"/>
<rect x="182" y="815" width="1" height="1" fill="#2aa0d8"/>
<rect x="179" y="819" width="1" height="1" fill="#2aa0d8"/>
<rect x="179" y="809" width="1" height="1" fill="#2aa0d8"/>
<rect x="180" y="804" width="1" height="1" fill="#2aa0d8"/>
<rect x="181" y="800" width="1" height="1" fill="#2aa0d8"/>
<rect x="182" y="817" width="1" height="1" fill="#2aa0d8"/>
<rect x="180" y="815" width="1" height="1" fill="#2aa0d8"/>
<rect x="176" y="803" width="1" height="1" fill="#2aa0d8"/>
<rect x="176" y="806" width="1" height="1" fill="#2aa0d8"/>
<rect x="182" y="830" width="1" height="1" fill="#2aa0d8"/>
<rect x="179" y="798" width="1" height="1" fill="#2aa0d8"/>
<rect x="176" y="797" width="1" height="1" fill="#2aa0d8"/>
<rect x="181" y="824" width="1" height="1" fill="#2aa0d8"/>
<rect x="179" y="801" width="1" height="1" fill="#2aa0d8"/>
<rect x="177" y="801" width="1" height="1" fill="#2aa0d8"/>
<rect x="182" y="822" width="1" height="1" fill="#2aa0d8"/>
<rect x="172" y="812" width="1" height="1" fill="#2aa0d8"/>
<rect x="172" y="803" width="1" height="1" fill="#2aa0d8"/>
<rect x="173" y="832" width="1" height="1" fill="#2aa0d8"/>
<rect x="172" y="815" width="1" height="1" fill="#2aa0d8"/>
<rect x="171" y="812" width="1" height="1" fill="#2aa0d8"/>
<rect x="172" y="832" width="1" height="1" fill="#2aa0d8"/>
<rect x="172" y="813" width="1" height="1" fill="#2aa0d8"/>
<rect x="172" y="814" width="1" height="1" fill="#2aa0d8"/>
<rect x="171" y="828" width="1" height="1" fill="#2aa0d8"/>
<rect x="172" y="821" width="1" height="1" fill="#2aa0d8"/>
<rect x="172" y="831" width="1" height="1" fill="#2aa0d8"/>
<rect x="171" y="818" width="1" height="1" fill="#2aa0d8"/>
<rect x="171" y="833" width="1" height="1" fill="#2aa0d8"/>
<rect x="171" y="802" width="1" height="1" fill="#2aa0d8"/>
<rect x="173" y="803" width="1" height="1" fill="#2aa0d8"/>
<rect x="173" y="832" width="1" height="1" fill="#2aa0d8"/>
<rect x="172" y="804" width="1" height="1" fill="#2aa0d8"/>
<rect x="172" y="810" width="1" height="1" fill="#2aa0d8"/>
<rect x="114" y="792" width="1" height="9" fill="#2aa0e0" />
<rect x="125" y="797" width="1" height="7" fill="#2aa0e0" />
<rect x="131" y="799" width="1" height="8" fill="#2aa0e0" />
<rect x="138" y="801" width="1" height="10" fill="#2aa0e0" />
<rect x="148" y="803" width="1" height="14" fill="#2aa0e0" />
<rect x="159" y="806" width="1" height="20" fill="#2aa0e0" />
<rect x="172" y="802" width="1" height="30" fill="#2aa0e0" />
<rect x="96" y="789" width="2" height="5" fill="#e07818" />
<rect x="105" y="793" width="2" height="2" fill="#1414b4"/>
<rect x="104" y="793" width="2" height="2" fill="#1414b4"/>
<rect x="102" y="794" width="2" height="2" fill="#1414b4"/>
<rect x="109" y="795" width="2" height="2" fill="#1414b4"/>
<rect x="108" y="795" width="2" height="2" fill="#1414b4"/>
<rect x="110" y="794" width="2" height="2" fill="#1414b4"/>
<rect x="110" y="796" width="2" height="2" fill="#1414b4"/>
<rect x="108" y="795" width="2" height="2" fill="#1414b4"/>
<rect x="105" y="795" width="2" height="2" fill="#1414b4"/>
<rect x="111" y="798" width="2" height="2" fill="#1414b4"/>
<rect x="99" y="793" width="2" height="2" fill="#1414b4"/>
<rect x="113" y="798" width="2" height="2" fill="#1414b4"/>
<rect x="97" y="790" width="2" height="2" fill="#1414b4"/>
<rect x="101" y="793" width="2" height="2" fill="#1414b4"/>
<rect x="106" y="795" width="2" height="2" fill="#1414b4"/>
<rect x="99" y="793" width="2" height="2" fill="#1414b4"/>
<rect x="100" y="791" width="2" height="2" fill="#1414b4"/>
<rect x="101" y="793" width="2" height="2" fill="#1414b4"/>
<rect x="100" y="791" width="2" height="2" fill="#1414b4"/>
<rect x="106" y="793" width="2" height="2" fill="#1414b4"/>
<rect x="103" y="791" width="2" height="2" fill="#1414b4"/>
<rect x="99" y="792" width="2" height="2" fill="#1414b4"/>
<rect x="104" y="795" width="2" height="2" fill="#1414b4"/>
<rect x="112" y="796" width="2" height="2" fill="#1414b4"/>
<rect x="104" y="794" width="2" height="2" fill="#1414b4"/>
<rect x="111" y="797" width="2" height="2" fill="#1414b4"/>
<rect x="96" y="791" width="2" height="2" fill="#1414b4"/>
<rect x="109" y="795" width="2" height="2" fill="#1414b4"/>
<rect x="100" y="793" width="2" height="2" fill="#1414b4"/>
<rect x="102" y="792" width="2" height="2" fill="#1414b4"/>
<rect x="108" y="795" width="2" height="2" fill="#1414b4"/>
<rect x="106" y="796" width="2" height="2" fill="#1414b4"/>
<rect x="98" y="789" width="2" height="2" fill="#1414b4"/>
<rect x="110" y="797" width="2" height="2" fill="#1414b4"/>
<rect x="109" y="797" width="2" height="2" fill="#1414b4"/>
<rect x="106" y="794" width="2" height="2" fill="#1414b4"/>
<rect x="109" y="799" width="2" height="2" fill="#1414b4"/>
<rect x="104" y="793" width="2" height="2" fill="#1414b4"/>
<rect x="110" y="798" width="2" height="2" fill="#1414b4"/>
<rect x="106" y="797" width="2" height="2" fill="#1414b4"/>
<rect x="102" y="794" width="2" height="2" fill="#1414b4"/>
<rect x="100" y="793" width="2" height="2" fill="#1414b4"/>
<rect x="102" y="793" width="2" height="2" fill="#1414b4"/>
<rect x="100" y="794" width="2" height="2" fill="#1414b4"/>
<rect x="109" y="797" width="2" height="2" fill="#1414b4"/>
<rect x="100" y="792" width="2" height="2" fill="#8c1a5a"/>
<rect x="102" y="793" width="2" height="2" fill="#8c1a5a"/>
<rect x="106" y="794" width="2" height="2" fill="#8c1a5a"/>
<rect x="102" y="794" width="2" height="2" fill="#8c1a5a"/>
<rect x="102" y="794" width="2" height="2" fill="#8c1a5a"/>
<rect x="100" y="792" width="2" height="2" fill="#8c1a5a"/>
<rect x="99" y="791" width="2" height="2" fill="#8c1a5a"/>
<rect x="104" y="794" width="2" height="2" fill="#8c1a5a"/>
<rect x="100" y="792" width="2" height="2" fill="#8c1a5a"/>
<rect x="100" y="792" width="2" height="2" fill="#8c1a5a"/>
<rect x="117" y="797" width="2" height="2" fill="#1010a0" />
<rect x="124" y="801" width="2" height="2" fill="#1010a0" />
<rect x="131" y="804" width="2" height="2" fill="#1010a0" />
<rect x="139" y="807" width="2" height="2" fill="#1010a0" />
<rect x="147" y="812" width="2" height="2" fill="#1010a0" />
<rect x="160" y="817" width="2" height="2" fill="#1010a0" />
<rect x="170" y="819" width="2" height="2" fill="#1010a0" />
<rect x="653.5" y="56.5" width="996" height="334" fill="none" stroke="#b9b9b9" stroke-width="1"/>
<rect x="650" y="381" width="3" height="1" fill="#b9b9b9" />
<rect x="650" y="375" width="3" height="1" fill="#b9b9b9" />
<rect x="650" y="368" width="3" height="1" fill="#b9b9b9" />
<rect x="650" y="362" width="3" height="1" fill="#b9b9b9" />
<rect x="650" y="348" width="3" height="1" fill="#b9b9b9" />
<rect x="650" y="342" width="3" height="1" fill="#b9b9b9" />
<rect x="650" y="335" width="3" height="1" fill="#b9b9b9" />
<rect x="650" y="329" width="3" height="1" fill="#b9b9b9" />
<rect x="650" y="315" width="3" height="1" fill="#b9b9b9" />
<rect x="650" y="309" width="3" height="1" fill="#b9b9b9" />
<rect x="650" y="302" width="3" height="1" fill="#b9b9b9" />
<rect x="650" y="296" width="3" height="1" fill="#b9b9b9" />
<rect x="650" y="282" width="3" height="1" fill="#b9b9b9" />
<rect x="650" y="276" width="3" height="1" fill="#b9b9b9" />
<rect x="650" y="269" width="3" height="1" fill="#b9b9b9" />
<rect x="650" y="263" width="3" height="1" fill="#b9b9b9" />
<rect x="650" y="249" width="3" height="1" fill="#b9b9b9" />
<rect x="650" y="243" width="3" height="1" fill="#b9b9b9" />
<rect x="650" y="236" width="3" height="1" fill="#b9b9b9" />
<rect x="650" y="230" width="3" height="1" fill="#b9b9b9" />
<rect x="650" y="216" width="3" height="1" fill="#b9b9b9" />
<rect x="650" y="210" width="3" height="1" fill="#b9b9b9" />
<rect x="650" y="203" width="3" height="1" fill="#b9b9b9" />
<rect x="650" y="197" width="3" height="1" fill="#b9b9b9" />
<rect x="650" y="183" width="3" height="1" fill="#b9b9b9" />
<rect x="650" y="177" width="3" height="1" fill="#b9b9b9" />
<rect x="650" y="170" width="3" height="1" fill="#b9b9b9" />
<rect x="650" y="164" width="3" height="1" fill="#b9b9b9" />
<rect x="650" y="150" width="3" height="1" fill="#b9b9b9" />
<rect x="650" y="144" width="3" height="1" fill="#b9b9b9" />
<rect x="650" y="137" width="3" height="1" fill="#b9b9b9" />
<rect x="650" y="131" width="3" height="1" fill="#b9b9b9" />
<rect x="650" y="117" width="3" height="1" fill="#b9b9b9" />
<rect x="650" y="111" width="3" height="1" fill="#b9b9b9" />
<rect x="650" y="104" width="3" height="1" fill="#b9b9b9" />
<rect x="650" y="98" width="3" height="1" fill="#b9b9b9" />
<rect x="650" y="84" width="3" height="1" fill="#b9b9b9" />
<rect x="650" y="78" width="3" height="1" fill="#b9b9b9" />
<rect x="650" y="71" width="3" height="1" fill="#b9b9b9" />
<rect x="650" y="64" width="3" height="1" fill="#b9b9b9" />
<rect x="645" y="388" width="8" height="1" fill="#b9b9b9" />
<text x="638" y="392.9" fill="#24a024" font-size="12" text-anchor="end" >0</text>
<rect x="645" y="355" width="8" height="1" fill="#b9b9b9" />
<text x="638" y="359.88" fill="#24a024" font-size="12" text-anchor="end" >1000</text>
<rect x="645" y="322" width="8" height="1" fill="#b9b9b9" />
<text x="638" y="326.86" fill="#24a024" font-size="12" text-anchor="end" >2000</text>
<rect x="645" y="289" width="8" height="1" fill="#b9b9b9" />
<text x="638" y="293.83" fill="#24a024" font-size="12" text-anchor="end" >3000</text>
<rect x="645" y="256" width="8" height="1" fill="#b9b9b9" />
<text x="638" y="260.81" fill="#24a024" font-size="12" text-anchor="end" >4000</text>
<rect x="645" y="223" width="8" height="1" fill="#b9b9b9" />
<text x="638" y="227.79" fill="#24a024" font-size="12" text-anchor="end" >5000</text>
<rect x="645" y="190" width="8" height="1" fill="#b9b9b9" />
<text x="638" y="194.77" fill="#24a024" font-size="12" text-anchor="end" >6000</text>
<rect x="645" y="157" width="8" height="1" fill="#b9b9b9" />
<text x="638" y="161.75" fill="#24a024" font-size="12" text-anchor="end" >7000</text>
<rect x="645" y="124" width="8" height="1" fill="#b9b9b9" />
<text x="638" y="128.72" fill="#24a024" font-size="12" text-anchor="end" >8000</text>
<rect x="645" y="91" width="8" height="1" fill="#b9b9b9" />
<text x="638" y="95.7" fill="#24a024" font-size="12" text-anchor="end" >9000</text>
<rect x="645" y="58" width="8" height="1" fill="#b9b9b9" />
<text x="638" y="62.68" fill="#24a024" font-size="12" text-anchor="end" >10000</text>
<text transform="translate(586.5,223) rotate(-90)" fill="#24a024" font-size="12" text-anchor="middle" textLength="68.6" lengthAdjust="spacingAndGlyphs">map1 (mBar)</text>
<rect x="654" y="353.8" width="995" height="1.4" fill="#6c6c6c" />
<polyline points="654,354.4 690.5,354.4 695.5,359.8 708.5,359.5 713.5,364.5 730.5,364 733.8,367.3 750,367.3 753.5,370.5 765,370.5 770.5,373.3 782,373.3 785,375.3 796,375.3 799,377.5 810,377.5 811,378.5 821,378.5 822,379.5 832,379.5 833,381 844,381 845,381.8 857,381.8 858,382.5 880,382.5 880,383.2 900.5,383.2 901,384.3 932,384.3 934,378 936,370 938,363 940,358 942,355 1005.5,354.6 1005,354.6 1007.5,349.8 1009,350.4 1021.5,350.8 1022,350.8 1024.5,345.6 1026,346.2 1038.5,346.6 1039,346.6 1041.5,341.2 1043,341.8 1054.5,342.2 1055,342.2 1057.5,336.6 1059,337.2 1072.5,337.6 1073,337.6 1075.5,332.7 1077,333.3 1088.5,333.7 1089,333.7 1091.5,328.6 1093,329.2 1104.5,329.6 1105,329.6 1107.5,324.8 1109,325.4 1119.5,325.8 1120,325.8 1122.5,321.3 1124,321.9 1135.5,322.3 1136,322.3 1138.5,317.7 1140,318.3 1150.5,318.7 1151,318.7 1153.5,314.2 1155,314.8 1165.5,315.2 1166,315.2 1168.5,311 1170,311.6 1180.5,312 1181,312 1183.5,307.9 1185,308.5 1194.5,308.9 1195,308.9 1197.5,304.8 1199,305.4 1208.5,305.8 1209,305.8 1211.5,301.8 1213,302.4 1223,302.8 1223.5,302.8 1226,299.1 1227.5,299.7 1236.5,300.1 1237,300.1 1239.5,295.8 1241,296.4 1250.5,296.8 1251,296.8 1253.5,293.4 1255,294 1264.5,294.4 1265,294.4 1267.5,291 1269,291.6 1277.5,292 1278,292 1280.5,288.8 1282,289.4 1289.5,289.8 1290,289.8 1292.5,286.1 1294,286.7 1301.5,287.1 1302,287.1 1304.5,283.9 1306,284.5 1314.5,284.9 1315,284.9 1317.5,281.7 1319,282.3 1328,282.7 1328.5,282.7 1331,279.2 1332.5,279.8 1340,280.2 1340.5,280.2 1343,277.3 1344.5,277.9 1353,278.3 1353.5,278.3 1356,275.1 1357.5,275.7 1365,276.1 1365.5,276.1 1368,273.2 1369.5,273.8 1377.5,274.2 1378,274.2 1380.5,270.8 1382,271.4 1389.5,271.8 1390,271.8 1392.5,268.6 1394,269.2 1401.8,269.6 1402.3,269.6 1404.8,266.2 1406.3,266.8 1414.5,267.2 1415,267.2 1417.5,264.4 1419,265 1428.1,265.4 1428.6,265.4 1431.1,262.15 1432.6,262.75 1440.5,263.15 1441,263.15 1443.5,260.3 1445,260.9 1453.1,261.3 1453.6,261.3 1456.1,257.9 1457.6,258.5 1465,258.9 1465.5,258.9 1468,256 1469.5,256.6 1476.5,257 1477,257 1479.5,253.8 1481,254.4 1490,254.8 1490.5,254.8 1493,251.9 1494.5,252.5 1502.1,252.9 1502.6,252.9 1505.1,250 1506.6,250.6 1518.1,251.25 1519.4,255 1520.6,272.5 1522.5,285 1525,300 1527.5,312.5 1530,323.75 1532.5,335 1535,342.5 1538.1,348.75 1541.9,353.1 1545,354.4 1649,354.4" fill="none" stroke="#24a024" stroke-width="1.4" stroke-linejoin="round" />
<polyline points="654,256.5 690.5,256.5 694.5,264.3 708.5,264 713.5,270.5 730,270.5 734,275.5 750,275.5 753.5,279.5 765,279.5 770,283.5 780.5,283.5 784,286.5 796.5,286.5 799.5,289 808.5,289 812.5,291.5 822,291 825,293 833,292.5 836,294.5 845,294.5 847,295.5 857,295.5 858,296.5 868,296.5 869,297.5 888,297.5 889,298.3 912,298.3 913,299.3 932.5,299.3 933.5,296 934,290 935,284 936,278 937,272.5 938,268 939,263 940,260 942,257.5 943,256.3 1005,256.5 1005,256.5 1007.5,249.9 1009,250.5 1021.5,250.9 1022,250.9 1024.5,245.2 1026,245.8 1038.5,246.2 1039,246.2 1041.5,241.9 1043,242.5 1054.5,242.9 1055,242.9 1057.5,237.4 1059,238 1072.5,238.4 1073,238.4 1075.5,232.9 1077,233.5 1088.5,233.9 1089,233.9 1091.5,227.9 1093,228.5 1104.5,228.9 1105,228.9 1107.5,223.1 1109,223.7 1119.5,224.1 1120,224.1 1122.5,218.6 1124,219.2 1135.5,219.6 1136,219.6 1138.5,213.9 1140,214.5 1150.5,214.9 1151,214.9 1153.5,209.4 1155,210 1165.5,210.4 1166,210.4 1168.5,205.15 1170,205.75 1180.5,206.15 1181,206.15 1183.5,200.2 1185,200.8 1194.5,201.2 1195,201.2 1197.5,196.4 1199,197 1208.5,197.4 1209,197.4 1211.5,192.6 1213,193.2 1223,193.6 1223.5,193.6 1226,188.4 1227.5,189 1236.5,189.4 1237,189.4 1239.5,184.7 1241,185.3 1250.5,185.7 1251,185.7 1253.5,181.3 1255,181.9 1264.5,182.3 1265,182.3 1267.5,177.5 1269,178.1 1277.5,178.5 1278,178.5 1280.5,174.2 1282,174.8 1289.5,175.2 1290,175.2 1292.5,171.2 1294,171.8 1301.5,172.2 1302,172.2 1304.5,167.6 1306,168.2 1314.5,168.6 1315,168.6 1317.5,164.3 1319,164.9 1328,165.3 1328.5,165.3 1331,161.4 1332.5,162 1340,162.4 1340.5,162.4 1343,158.4 1344.5,159 1353,159.4 1353.5,159.4 1356,155.4 1357.5,156 1365,156.4 1365.5,156.4 1368,152.1 1369.5,152.7 1377.5,153.1 1378,153.1 1380.5,148.7 1382,149.3 1389.5,149.7 1390,149.7 1392.5,146 1394,146.6 1401.8,147 1402.3,147 1404.8,142.9 1406.3,143.5 1414.5,143.9 1415,143.9 1417.5,140 1419,140.6 1428.1,141 1428.6,141 1431.1,137 1432.6,137.6 1440.5,138 1441,138 1443.5,133.9 1445,134.5 1453.1,134.9 1453.6,134.9 1456.1,130.9 1457.6,131.5 1465,131.9 1465.5,131.9 1468,127.9 1469.5,128.5 1476.5,128.9 1477,128.9 1479.5,125 1481,125.6 1490,126 1490.5,126 1493,121.4 1494.5,122 1502.1,122.4 1502.6,122.4 1505.1,118.8 1506.6,119.4 1509.4,120.3 1518.75,120.3 1519.5,125.2 1519.9,137.8 1521,151 1522,160.8 1523.1,168.5 1524.2,177.2 1525.3,184.3 1526.4,191.5 1527.4,200 1528.1,206 1529.3,211.3 1530.4,217.4 1531.5,223.4 1532.7,230.2 1534.2,237 1536.1,243.8 1538,248.4 1541,252.2 1545.5,255.2 1649,255.6" fill="none" stroke="#1a4c9c" stroke-width="1.4" stroke-linejoin="round" />
<rect x="1467" y="57" width="1" height="333" fill="#000" />
<rect x="644" y="255.6" width="9" height="2" fill="#24a024" />
<path d="M644.5,324.5 L652.5,329 L644.5,333.5 Z" fill="#24a024" stroke="#000" stroke-width="1"/>
<text x="659.5" y="333" fill="#000" font-size="9.5" text-anchor="start" >1801</text>
<path d="M920,392.5 L929,392.5 L924.5,400 Z" fill="#24a024" stroke="#000" stroke-width="0.8"/>
<text x="932" y="398.5" fill="#000" font-size="9.5" text-anchor="start" >119</text>
<path d="M1500,55 L1509,55 L1504.5,47.5 Z" fill="#24a024" stroke="#000" stroke-width="0.8"/>
<text x="1512" y="55.5" fill="#000" font-size="9.5" text-anchor="start" >4185</text>
<rect x="653.5" y="416.5" width="996" height="128" fill="none" stroke="#b9b9b9" stroke-width="1"/>
<rect x="650" y="537" width="3" height="1" fill="#b9b9b9" />
<rect x="650" y="532" width="3" height="1" fill="#b9b9b9" />
<rect x="650" y="528" width="3" height="1" fill="#b9b9b9" />
<rect x="650" y="523" width="3" height="1" fill="#b9b9b9" />
<rect x="650" y="514" width="3" height="1" fill="#b9b9b9" />
<rect x="650" y="509" width="3" height="1" fill="#b9b9b9" />
<rect x="650" y="504" width="3" height="1" fill="#b9b9b9" />
<rect x="650" y="500" width="3" height="1" fill="#b9b9b9" />
<rect x="650" y="490" width="3" height="1" fill="#b9b9b9" />
<rect x="650" y="486" width="3" height="1" fill="#b9b9b9" />
<rect x="650" y="481" width="3" height="1" fill="#b9b9b9" />
<rect x="650" y="476" width="3" height="1" fill="#b9b9b9" />
<rect x="650" y="467" width="3" height="1" fill="#b9b9b9" />
<rect x="650" y="462" width="3" height="1" fill="#b9b9b9" />
<rect x="650" y="458" width="3" height="1" fill="#b9b9b9" />
<rect x="650" y="453" width="3" height="1" fill="#b9b9b9" />
<rect x="650" y="444" width="3" height="1" fill="#b9b9b9" />
<rect x="650" y="439" width="3" height="1" fill="#b9b9b9" />
<rect x="650" y="434" width="3" height="1" fill="#b9b9b9" />
<rect x="650" y="430" width="3" height="1" fill="#b9b9b9" />
<rect x="650" y="420" width="3" height="1" fill="#b9b9b9" />
<rect x="645" y="542" width="8" height="1" fill="#b9b9b9" />
<text x="638" y="546.6" fill="#b81a3e" font-size="12" text-anchor="end" >0.00</text>
<rect x="645" y="518" width="8" height="1" fill="#b9b9b9" />
<text x="638" y="523.22" fill="#b81a3e" font-size="12" text-anchor="end" >10.00</text>
<rect x="645" y="495" width="8" height="1" fill="#b9b9b9" />
<text x="638" y="499.84" fill="#b81a3e" font-size="12" text-anchor="end" >20.00</text>
<rect x="645" y="472" width="8" height="1" fill="#b9b9b9" />
<text x="638" y="476.46" fill="#b81a3e" font-size="12" text-anchor="end" >30.00</text>
<rect x="645" y="448" width="8" height="1" fill="#b9b9b9" />
<text x="638" y="453.08" fill="#b81a3e" font-size="12" text-anchor="end" >40.00</text>
<rect x="645" y="425" width="8" height="1" fill="#b9b9b9" />
<text x="638" y="429.7" fill="#b81a3e" font-size="12" text-anchor="end" >50.00</text>
<text transform="translate(586,480) rotate(-90)" fill="#b81a3e" font-size="12" text-anchor="middle" textLength="35.9" lengthAdjust="spacingAndGlyphs">BOOST</text>
<defs><clipPath id="c2clip"><rect x="654" y="417" width="995" height="126.6"/></clipPath></defs>
<polyline points="654,541.73 690.5,541.73 695.5,547.27 708.5,546.96 713.5,552.1 730.5,551.59 733.8,554.97 750,554.97 753.5,558.26 765,558.26 770.5,561.14 782,561.14 785,563.19 796,563.19 799,565.45 810,565.45 811,566.48 821,566.48 822,567.5 832,567.5 833,569.04 844,569.04 845,569.87 857,569.87 858,570.59 880,570.59 880,571.3 900.5,571.3 901,572.43 932,572.43 934,565.96 936,557.75 938,550.56 940,545.42 942,542.34 1005.5,541.93 1005,541.93 1007.5,537 1009,537.62 1021.5,538.03 1022,538.03 1024.5,532.69 1026,533.31 1038.5,533.72 1039,533.72 1041.5,528.17 1043,528.79 1054.5,529.2 1055,529.2 1057.5,523.45 1059,524.06 1072.5,524.47 1073,524.47 1075.5,519.44 1077,520.06 1088.5,520.47 1089,520.47 1091.5,515.23 1093,515.85 1104.5,516.26 1105,516.26 1107.5,511.33 1109,511.94 1119.5,512.35 1120,512.35 1122.5,507.73 1124,508.35 1135.5,508.76 1136,508.76 1138.5,504.04 1140,504.65 1150.5,505.06 1151,505.06 1153.5,500.44 1155,501.06 1165.5,501.47 1166,501.47 1168.5,497.15 1170,497.77 1180.5,498.18 1181,498.18 1183.5,493.97 1185,494.59 1194.5,495 1195,495 1197.5,490.79 1199,491.4 1208.5,491.81 1209,491.81 1211.5,487.71 1213,488.32 1223,488.73 1223.5,488.73 1226,484.93 1227.5,485.55 1236.5,485.96 1237,485.96 1239.5,481.54 1241,482.16 1250.5,482.57 1251,482.57 1253.5,479.08 1255,479.7 1264.5,480.11 1265,480.11 1267.5,476.61 1269,477.23 1277.5,477.64 1278,477.64 1280.5,474.36 1282,474.97 1289.5,475.38 1290,475.38 1292.5,471.58 1294,472.2 1301.5,472.61 1302,472.61 1304.5,469.32 1306,469.94 1314.5,470.35 1315,470.35 1317.5,467.06 1319,467.68 1328,468.09 1328.5,468.09 1331,464.5 1332.5,465.11 1340,465.52 1340.5,465.52 1343,462.54 1344.5,463.16 1353,463.57 1353.5,463.57 1356,460.29 1357.5,460.9 1365,461.31 1365.5,461.31 1368,458.33 1369.5,458.95 1377.5,459.36 1378,459.36 1380.5,455.87 1382,456.49 1389.5,456.9 1390,456.9 1392.5,453.61 1394,454.23 1401.8,454.64 1402.3,454.64 1404.8,451.15 1406.3,451.76 1414.5,452.17 1415,452.17 1417.5,449.3 1419,449.91 1428.1,450.32 1428.6,450.32 1431.1,446.99 1432.6,447.6 1440.5,448.01 1441,448.01 1443.5,445.09 1445,445.7 1453.1,446.11 1453.6,446.11 1456.1,442.62 1457.6,443.24 1465,443.65 1465.5,443.65 1468,440.67 1469.5,441.29 1476.5,441.7 1477,441.7 1479.5,438.41 1481,439.03 1490,439.44 1490.5,439.44 1493,436.46 1494.5,437.08 1502.1,437.49 1502.6,437.49 1505.1,434.51 1506.6,435.12 1518.1,435.79 1519.4,439.64 1520.6,457.62 1522.5,470.45 1525,485.86 1527.5,498.7 1530,510.25 1532.5,521.8 1535,529.51 1538.1,535.92 1541.9,540.39 1545,541.73 1649,541.73" fill="none" stroke="#a8122e" stroke-width="1.4" stroke-linejoin="round" clip-path="url(#c2clip)"/>
<rect x="1467" y="417" width="1" height="127" fill="#000" />
<rect x="644" y="440.2" width="9" height="2" fill="#b81a3e" />
<path d="M644.5,512.5 L652.5,517 L644.5,521.5 Z" fill="#d4102e" stroke="#000" stroke-width="1"/>
<text x="659.5" y="519" fill="#000" font-size="9.5" text-anchor="start" >11.35</text>
<path d="M920,546.5 L929,546.5 L924.5,554 Z" fill="#d4102e" stroke="#000" stroke-width="0.8"/>
<text x="932" y="552.5" fill="#000" font-size="9.5" text-anchor="start" >-13.05</text>
<path d="M1500,415 L1509,415 L1504.5,407.5 Z" fill="#d4102e" stroke="#000" stroke-width="0.8"/>
<text x="1512" y="415" fill="#000" font-size="9.5" text-anchor="start" >45.92</text>
<polygon points="654,694 654,658 689,658 695,665.2 711,665 714,670 730,670 734,674 751,674 754,677 766,677 770,680.2 786,682.6 800,684.5 822,688 860,691 900,692.3 932,692.5 935,675 937,662 941,657.5 943,656.8 1005,657 1005,657 1007.5,652.9 1009,653.5 1021.5,653.9 1022,653.9 1024.5,651.6 1026,652.2 1038.5,652.6 1039,652.6 1041.5,654.6 1043,655.2 1054.5,655.6 1055,655.6 1057.5,654.4 1059,655 1072.5,655.4 1073,655.4 1075.5,652 1077,652.6 1088.5,653 1089,653 1091.5,649.6 1093,650.2 1104.5,650.6 1105,650.6 1107.5,647.4 1109,648 1119.5,648.4 1120,648.4 1122.5,644.7 1124,645.3 1135.5,645.7 1136,645.7 1138.5,642.2 1140,642.8 1150.5,643.2 1151,643.2 1153.5,639.1 1155,639.7 1165.5,640.1 1166,640.1 1168.5,637.3 1170,637.9 1180.5,638.3 1181,638.3 1183.5,634.2 1185,634.8 1194.5,635.2 1195,635.2 1197.5,631.4 1199,632 1208.5,632.4 1209,632.4 1211.5,628.5 1213,629.1 1223,629.5 1223.5,629.5 1226,626 1227.5,626.6 1236.5,627 1237,627 1239.5,622.9 1241,623.5 1250.5,623.9 1251,623.9 1253.5,620.2 1255,620.8 1264.5,621.2 1265,621.2 1267.5,617.8 1269,618.4 1277.5,618.8 1278,618.8 1280.5,615.3 1282,615.9 1289.5,616.3 1290,616.3 1292.5,613.4 1294,614 1301.5,614.4 1302,614.4 1304.5,611 1306,611.6 1314.5,612 1315,612 1317.5,607.9 1319,608.5 1328,608.9 1328.5,608.9 1331,605.7 1332.5,606.3 1340,606.7 1340.5,606.7 1343,603.2 1344.5,603.8 1353,604.2 1353.5,604.2 1356,601 1357.5,601.6 1365,602 1365.5,602 1368,598.3 1369.5,598.9 1377.5,599.3 1378,599.3 1380.5,596.1 1382,596.7 1389.5,597.1 1390,597.1 1392.5,593.7 1394,594.3 1401.8,594.7 1402.3,594.7 1404.8,591.2 1406.3,591.8 1414.5,592.2 1415,592.2 1417.5,589 1419,589.6 1428.1,590 1428.6,590 1431.1,586.3 1432.6,586.9 1440.5,587.3 1441,587.3 1443.5,584.1 1445,584.7 1453.1,585.1 1453.6,585.1 1456.1,581.9 1457.6,582.5 1465,582.9 1465.5,582.9 1468,579.7 1469.5,580.3 1476.5,580.7 1477,580.7 1479.5,578.1 1481,578.7 1490,579.1 1490.5,579.1 1493,574.8 1494.5,575.4 1502.1,575.8 1502.6,575.8 1505.1,572.2 1506.6,572.8 1518.5,573.2 1519.6,581.4 1520.7,597.8 1522.9,611 1525,619.7 1530,640 1535,652 1540,655.5 1545,656.5 1649,657 1649,694" fill="#f2f2f2"/>
<polyline points="654,647.4 689,647.4 695,653 711,653 715,657.9 730,657.9 734,661.4 751,661.4 755,664.4 770,666.8 800,670 822,672.4 860,675.2 900,677 932,677.3 935,665 937,652 941,647 943,646.5 1005,647 1005,647 1007.5,643 1009,643.6 1021.5,644 1022,644 1024.5,641.9 1026,642.5 1038.5,642.9 1039,642.9 1041.5,644.6 1043,645.2 1054.5,645.6 1055,645.6 1057.5,643.9 1059,644.5 1072.5,644.9 1073,644.9 1075.5,641.9 1077,642.5 1088.5,642.9 1089,642.9 1091.5,640 1093,640.6 1104.5,641 1105,641 1107.5,637.9 1109,638.5 1119.5,638.9 1120,638.9 1122.5,635.8 1124,636.4 1135.5,636.8 1136,636.8 1138.5,633.6 1140,634.2 1150.5,634.6 1151,634.6 1153.5,630.9 1155,631.5 1165.5,631.9 1166,631.9 1168.5,629 1170,629.6 1180.5,630 1181,630 1183.5,626 1185,626.6 1194.5,627 1195,627 1197.5,623.8 1199,624.4 1208.5,624.8 1209,624.8 1211.5,621.4 1213,622 1223,622.4 1223.5,622.4 1226,619.4 1227.5,620 1236.5,620.4 1237,620.4 1239.5,616.7 1241,617.3 1250.5,617.7 1251,617.7 1253.5,614.8 1255,615.4 1264.5,615.8 1265,615.8 1267.5,612.3 1269,612.9 1277.5,613.3 1278,613.3 1280.5,610.1 1282,610.7 1289.5,611.1 1290,611.1 1292.5,607.9 1294,608.5 1301.5,608.9 1302,608.9 1304.5,606.3 1306,606.9 1314.5,607.3 1315,607.3 1317.5,604.1 1319,604.7 1328,605.1 1328.5,605.1 1331,601.7 1332.5,602.3 1340,602.7 1340.5,602.7 1343,599.2 1344.5,599.8 1353,600.2 1353.5,600.2 1356,597 1357.5,597.6 1365,598 1365.5,598 1368,595 1369.5,595.6 1377.5,596 1378,596 1380.5,593.1 1382,593.7 1389.5,594.1 1390,594.1 1392.5,591 1394,591.6 1401.8,592 1402.3,592 1404.8,589 1406.3,589.6 1414.5,590 1415,590 1417.5,587.2 1419,587.8 1428.1,588.2 1428.6,588.2 1431.1,585 1432.6,585.6 1440.5,586 1441,586 1443.5,583.3 1445,583.9 1453.1,584.3 1453.6,584.3 1456.1,581.4 1457.6,582 1465,582.4 1465.5,582.4 1468,579.5 1469.5,580.1 1476.5,580.5 1477,580.5 1479.5,577.9 1481,578.5 1490,578.9 1490.5,578.9 1493,574.7 1494.5,575.3 1502.1,575.7 1502.6,575.7 1505.1,572.1 1506.6,572.7 1518.5,573 1521,590 1526,620 1531,635 1535,643 1540,645.5 1545,645.7 1649,646" fill="none" stroke="#c6c6c6" stroke-width="1.3" stroke-linejoin="round" />
<polyline points="654,658 689,658 695,665.2 711,665 714,670 730,670 734,674 751,674 754,677 766,677 770,680.2 786,682.6 800,684.5 822,688 860,691 900,692.3 932,692.5 935,675 937,662 941,657.5 943,656.8 1005,657 1005,657 1007.5,652.9 1009,653.5 1021.5,653.9 1022,653.9 1024.5,651.6 1026,652.2 1038.5,652.6 1039,652.6 1041.5,654.6 1043,655.2 1054.5,655.6 1055,655.6 1057.5,654.4 1059,655 1072.5,655.4 1073,655.4 1075.5,652 1077,652.6 1088.5,653 1089,653 1091.5,649.6 1093,650.2 1104.5,650.6 1105,650.6 1107.5,647.4 1109,648 1119.5,648.4 1120,648.4 1122.5,644.7 1124,645.3 1135.5,645.7 1136,645.7 1138.5,642.2 1140,642.8 1150.5,643.2 1151,643.2 1153.5,639.1 1155,639.7 1165.5,640.1 1166,640.1 1168.5,637.3 1170,637.9 1180.5,638.3 1181,638.3 1183.5,634.2 1185,634.8 1194.5,635.2 1195,635.2 1197.5,631.4 1199,632 1208.5,632.4 1209,632.4 1211.5,628.5 1213,629.1 1223,629.5 1223.5,629.5 1226,626 1227.5,626.6 1236.5,627 1237,627 1239.5,622.9 1241,623.5 1250.5,623.9 1251,623.9 1253.5,620.2 1255,620.8 1264.5,621.2 1265,621.2 1267.5,617.8 1269,618.4 1277.5,618.8 1278,618.8 1280.5,615.3 1282,615.9 1289.5,616.3 1290,616.3 1292.5,613.4 1294,614 1301.5,614.4 1302,614.4 1304.5,611 1306,611.6 1314.5,612 1315,612 1317.5,607.9 1319,608.5 1328,608.9 1328.5,608.9 1331,605.7 1332.5,606.3 1340,606.7 1340.5,606.7 1343,603.2 1344.5,603.8 1353,604.2 1353.5,604.2 1356,601 1357.5,601.6 1365,602 1365.5,602 1368,598.3 1369.5,598.9 1377.5,599.3 1378,599.3 1380.5,596.1 1382,596.7 1389.5,597.1 1390,597.1 1392.5,593.7 1394,594.3 1401.8,594.7 1402.3,594.7 1404.8,591.2 1406.3,591.8 1414.5,592.2 1415,592.2 1417.5,589 1419,589.6 1428.1,590 1428.6,590 1431.1,586.3 1432.6,586.9 1440.5,587.3 1441,587.3 1443.5,584.1 1445,584.7 1453.1,585.1 1453.6,585.1 1456.1,581.9 1457.6,582.5 1465,582.9 1465.5,582.9 1468,579.7 1469.5,580.3 1476.5,580.7 1477,580.7 1479.5,578.1 1481,578.7 1490,579.1 1490.5,579.1 1493,574.8 1494.5,575.4 1502.1,575.8 1502.6,575.8 1505.1,572.2 1506.6,572.8 1518.5,573.2 1519.6,581.4 1520.7,597.8 1522.9,611 1525,619.7 1530,640 1535,652 1540,655.5 1545,656.5 1649,657" fill="none" stroke="#4c4c4c" stroke-width="1.4" stroke-linejoin="round" />
<rect x="653" y="570.5" width="997" height="124.5" fill="none" stroke="#000" stroke-width="2"/>
<rect x="649" y="692" width="3" height="1" fill="#000" />
<rect x="649" y="688" width="3" height="1" fill="#000" />
<rect x="649" y="684" width="3" height="1" fill="#000" />
<rect x="649" y="675" width="3" height="1" fill="#000" />
<rect x="649" y="671" width="3" height="1" fill="#000" />
<rect x="649" y="667" width="3" height="1" fill="#000" />
<rect x="649" y="662" width="3" height="1" fill="#000" />
<rect x="649" y="654" width="3" height="1" fill="#000" />
<rect x="649" y="649" width="3" height="1" fill="#000" />
<rect x="649" y="645" width="3" height="1" fill="#000" />
<rect x="649" y="641" width="3" height="1" fill="#000" />
<rect x="649" y="632" width="3" height="1" fill="#000" />
<rect x="649" y="628" width="3" height="1" fill="#000" />
<rect x="649" y="624" width="3" height="1" fill="#000" />
<rect x="649" y="619" width="3" height="1" fill="#000" />
<rect x="649" y="611" width="3" height="1" fill="#000" />
<rect x="649" y="606" width="3" height="1" fill="#000" />
<rect x="649" y="602" width="3" height="1" fill="#000" />
<rect x="649" y="598" width="3" height="1" fill="#000" />
<rect x="649" y="589" width="3" height="1" fill="#000" />
<rect x="649" y="585" width="3" height="1" fill="#000" />
<rect x="649" y="580" width="3" height="1" fill="#000" />
<rect x="649" y="576" width="3" height="1" fill="#000" />
<rect x="644" y="680" width="8" height="1" fill="#000" />
<text x="638" y="684.35" fill="#707070" font-size="12" text-anchor="end" >3750</text>
<rect x="644" y="658" width="8" height="1" fill="#000" />
<text x="638" y="662.8" fill="#707070" font-size="12" text-anchor="end" >4000</text>
<rect x="644" y="636" width="8" height="1" fill="#000" />
<text x="638" y="641.25" fill="#707070" font-size="12" text-anchor="end" >4250</text>
<rect x="644" y="615" width="8" height="1" fill="#000" />
<text x="638" y="619.7" fill="#707070" font-size="12" text-anchor="end" >4500</text>
<rect x="644" y="593" width="8" height="1" fill="#000" />
<text x="638" y="598.15" fill="#707070" font-size="12" text-anchor="end" >4750</text>
<text transform="translate(586.5,632.5) rotate(-90)" fill="#707070" font-size="12" text-anchor="middle" textLength="71" lengthAdjust="spacingAndGlyphs">relFp1 (mBar)</text>
<rect x="654" y="579" width="995" height="1" fill="#000" />
<rect x="1467" y="571" width="1" height="123" fill="#000" />
<rect x="644" y="578" width="9" height="2" fill="#606060" />
<path d="M644.5,638.5 L652.5,643 L644.5,647.5 Z" fill="#707070" stroke="#000" stroke-width="1"/>
<rect x="657" y="640" width="27" height="9" fill="#fff" />
<text x="659.5" y="647.5" fill="#000" font-size="9.5" text-anchor="start" >4170</text>
<path d="M915,697.5 L924,697.5 L919.5,705 Z" fill="#606060" stroke="#000" stroke-width="0.8"/>
<text x="927" y="703" fill="#000" font-size="9.5" text-anchor="start" >3600</text>
<path d="M1500,568 L1509,568 L1504.5,560.5 Z" fill="#606060" stroke="#000" stroke-width="0.8"/>
<text x="1512" y="568.5" fill="#000" font-size="9.5" text-anchor="start" >4994</text>
<rect x="653" y="720" width="1" height="93" fill="#b9b9b9" />
<rect x="653" y="822" width="1" height="93" fill="#b9b9b9" />
<rect x="650" y="810" width="3" height="1" fill="#b9b9b9" />
<rect x="650" y="804" width="3" height="1" fill="#b9b9b9" />
<rect x="650" y="793" width="3" height="1" fill="#b9b9b9" />
<rect x="650" y="788" width="3" height="1" fill="#b9b9b9" />
<rect x="650" y="782" width="3" height="1" fill="#b9b9b9" />
<rect x="650" y="777" width="3" height="1" fill="#b9b9b9" />
<rect x="650" y="766" width="3" height="1" fill="#b9b9b9" />
<rect x="650" y="760" width="3" height="1" fill="#b9b9b9" />
<rect x="650" y="755" width="3" height="1" fill="#b9b9b9" />
<rect x="650" y="750" width="3" height="1" fill="#b9b9b9" />
<rect x="650" y="739" width="3" height="1" fill="#b9b9b9" />
<rect x="650" y="733" width="3" height="1" fill="#b9b9b9" />
<rect x="650" y="728" width="3" height="1" fill="#b9b9b9" />
<rect x="650" y="722" width="3" height="1" fill="#b9b9b9" />
<rect x="645" y="799" width="8" height="1" fill="#b9b9b9" />
<text x="638" y="803.4" fill="#a820b4" font-size="12" text-anchor="end" >1.000</text>
<rect x="645" y="771" width="8" height="1" fill="#b9b9b9" />
<text x="638" y="776.15" fill="#a820b4" font-size="12" text-anchor="end" >1.250</text>
<rect x="645" y="744" width="8" height="1" fill="#b9b9b9" />
<text x="638" y="748.9" fill="#a820b4" font-size="12" text-anchor="end" >1.500</text>
<rect x="650" y="824" width="3" height="1" fill="#b9b9b9" />
<rect x="650" y="829" width="3" height="1" fill="#b9b9b9" />
<rect x="650" y="841" width="3" height="1" fill="#b9b9b9" />
<rect x="650" y="846" width="3" height="1" fill="#b9b9b9" />
<rect x="650" y="852" width="3" height="1" fill="#b9b9b9" />
<rect x="650" y="857" width="3" height="1" fill="#b9b9b9" />
<rect x="650" y="868" width="3" height="1" fill="#b9b9b9" />
<rect x="650" y="874" width="3" height="1" fill="#b9b9b9" />
<rect x="650" y="879" width="3" height="1" fill="#b9b9b9" />
<rect x="650" y="885" width="3" height="1" fill="#b9b9b9" />
<rect x="650" y="896" width="3" height="1" fill="#b9b9b9" />
<rect x="650" y="901" width="3" height="1" fill="#b9b9b9" />
<rect x="650" y="907" width="3" height="1" fill="#b9b9b9" />
<rect x="650" y="912" width="3" height="1" fill="#b9b9b9" />
<rect x="645" y="835" width="8" height="1" fill="#b9b9b9" />
<text x="638" y="839.8" fill="#1e8c1e" font-size="12" text-anchor="end" >-1.000</text>
<rect x="645" y="863" width="8" height="1" fill="#b9b9b9" />
<text x="638" y="867.35" fill="#1e8c1e" font-size="12" text-anchor="end" >-1.250</text>
<rect x="645" y="890" width="8" height="1" fill="#b9b9b9" />
<text x="638" y="894.9" fill="#1e8c1e" font-size="12" text-anchor="end" >-1.500</text>
<text transform="translate(586.5,766) rotate(-90)" fill="#a820b4" font-size="12" text-anchor="middle" textLength="86.7" lengthAdjust="spacingAndGlyphs">Base FP Rise Rat</text>
<text transform="translate(586.5,867.8) rotate(-90)" fill="#1e8c1e" font-size="12" text-anchor="middle" textLength="86" lengthAdjust="spacingAndGlyphs">Base FP Rise Rat</text>
<polygon points="1006,812 1006.3,720 1007,727 1008,740 1009,748 1010.5,755 1012,759 1014,757 1016,762 1018,756 1020,761 1023,760 1024,765 1026,771 1030,774.5 1034,773 1037,776 1040,775 1042,780 1044,787 1046,791.5 1049,792 1060,791 1074,790.5 1077,789 1090,788.5 1092,786 1103,786.5 1107,784.5 1122,784 1124,782.5 1138,782 1152,781 1155,780 1183,779 1200,777 1270,773.5 1340,770.5 1400,768.5 1467.5,766.5 1518,764.8 1527,773 1533,781 1536,789 1539,784 1540,776 1541,760 1542,748 1542.5,720 1548,720 1548,812" fill="#f9ebf9"/>
<polyline points="1006.3,720.17 1007,727.34 1007.1,728.71 1007.9,739.32 1008,740.34 1008.7,746.19 1009,747.34 1009.5,750.29 1010.3,754.69 1010.5,755.21 1011.1,757.16 1011.9,758.19 1012,758.96 1012.7,757.95 1013.5,757.56 1014,757.1 1014.3,757.07 1015.1,759.35 1015.9,761.44 1016,762.58 1016.7,760.27 1017.5,757.02 1018,756.42 1018.3,756.24 1019.1,758.91 1019.9,760.23 1020,760.3 1020.7,761.29 1021.5,760.09 1022.3,759.84 1023,760.68 1023.1,761.02 1023.9,764.21 1024,765.65 1024.7,767.15 1025.5,769.75 1026,770.59 1026.3,771.88 1027.1,772.23 1027.9,773.32 1028.7,773.91 1029.5,773.78 1030,774.31 1030.3,773.92 1031.1,773.59 1031.9,773.18 1032.7,773.21 1033.5,773.33 1034,772.3 1034.3,773.55 1035.1,773.87 1035.9,774.63 1036.7,776.15 1037,775.97 1037.5,775.58 1038.3,775.54 1039.1,775.59 1039.9,774.41 1040,775.67 1040.7,776.08 1041.5,779.1 1042,780.48 1042.3,780.38 1043.1,784.25 1043.9,786.46 1044,787.11 1044.7,787.89 1045.5,789.74 1046,791.05 1046.3,792.19 1047.1,791.26 1047.9,792.17 1048.7,792.55 1049,792.62 1049.5,791.74 1050.3,791.68 1051.1,791.84 1051.9,792.12 1052.7,791.11 1053.5,791.94 1054.3,791.93 1055.1,791.95 1055.9,790.72 1056.7,791.92 1057.5,790.65 1058.3,790.93 1059.1,791.24 1059.9,791.59 1060,790.78 1060.7,791.57 1061.5,791.01 1062.3,790.66 1063.1,790.63 1063.9,790.41 1064.7,790.24 1065.5,790.31 1066.3,791.04 1067.1,791.44 1067.9,790.24 1068.7,790.06 1069.5,791.34 1070.3,790.68 1071.1,790.47 1071.9,790.21 1072.7,790.68 1073.5,790.97 1074,790.44 1074.3,790.24 1075.1,789.33 1075.9,790.13 1076.7,788.5 1077,788.99 1077.5,789.45 1078.3,788.43 1079.1,789.24 1079.9,789.52 1080.7,789.04 1081.5,789.23 1082.3,788.25 1083.1,788.67 1083.9,788.24 1084.7,789.19 1085.5,788.39 1086.3,788.58 1087.1,789.31 1087.9,789.07 1088.7,789.22 1089.5,788.45 1090,788.48 1090.3,788.45 1091.1,787.1 1091.9,785.83 1092,785.87 1092.7,785.54 1093.5,785.9 1094.3,786.79 1095.1,786.78 1095.9,786.36 1096.7,786.21 1097.5,786.02 1098.3,785.71 1099.1,786 1099.9,786.75 1100.7,786.91 1101.5,786.24 1102.3,786.87 1103,786.88 1103.1,786.72 1103.9,786.28 1104.7,786.01 1105.5,785.06 1106.3,785.14 1107,784.19 1107.1,784.48 1107.9,784.85 1108.7,784.71 1109.5,784.13 1110.3,785.01 1111.1,784.57 1111.9,784.45 1112.7,783.63 1113.5,784.35 1114.3,783.91 1115.1,784.47 1115.9,784.15 1116.7,784.62 1117.5,784.36 1118.3,784.54 1119.1,783.88 1119.9,784.27 1120.7,784.38 1121.5,784.48 1122,783.79 1122.3,784.26 1123.1,783.69 1123.9,782.84 1124,783.17 1124.7,783.11 1125.5,782.47 1126.3,782.46 1127.1,781.92 1127.9,782.83 1128.7,782.94 1129.5,782.27 1130.3,782.54 1131.1,782.55 1131.9,782.54 1132.7,781.73 1133.5,782.55 1134.3,782.25 1135.1,782.34 1135.9,781.96 1136.7,782.22 1137.5,782.4 1138,782.19 1138.3,782.29 1139.1,781.26 1139.9,781.39 1140.7,781.72 1141.5,781.96 1142.3,781.3 1143.1,781.9 1143.9,781.76 1144.7,780.88 1145.5,781.42 1146.3,781.02 1147.1,780.73 1147.9,780.78 1148.7,780.98 1149.5,780.73 1150.3,780.69 1151.1,780.41 1151.9,780.96 1152,780.83 1152.7,780.92 1153.5,780.63 1154.3,779.87 1155,780.56 1155.1,779.3 1155.9,779.84 1156.7,779.63 1157.5,779.78 1158.3,779.34 1159.1,780.32 1159.9,779.65 1160.7,779.15 1161.5,779.93 1162.3,779.17 1163.1,779.77 1163.9,779.46 1164.7,779.77 1165.5,780.27 1166.3,780.04 1167.1,779.45 1167.9,779.98 1168.7,779.71 1169.5,779.3 1170.3,778.95 1171.1,779.56 1171.9,779.49 1172.7,780.01 1173.5,779.99 1174.3,779.46 1175.1,779.07 1175.9,779.8 1176.7,778.53 1177.5,778.65 1178.3,779.26 1179.1,779.3 1179.9,778.61 1180.7,779.26 1181.5,779.6 1182.3,778.85 1183,778.9 1183.1,778.61 1183.9,778.6 1184.7,779.46 1185.5,778.54 1186.3,779.26 1187.1,779.1 1187.9,778.56 1188.7,777.99 1189.5,778.91 1190.3,778.14 1191.1,777.93 1191.9,777.7 1192.7,778.54 1193.5,777.75 1194.3,777.37 1195.1,777.54 1195.9,776.95 1196.7,777.56 1197.5,777.21 1198.3,776.91 1199.1,777.5 1199.9,777.47 1200,776.32 1200.7,777.01 1201.5,776.61 1202.3,777.49 1203.1,777.24 1203.9,776.45 1204.7,776.44 1205.5,776.24 1206.3,777.37 1207.1,776.36 1207.9,776.76 1208.7,776.53 1209.5,776.73 1210.3,776.63 1211.1,776.79 1211.9,775.87 1212.7,776.73 1213.5,776.05 1214.3,776.33 1215.1,776.02 1215.9,775.92 1216.7,776.21 1217.5,776.08 1218.3,775.89 1219.1,776.39 1219.9,776.13 1220.7,775.32 1221.5,775.58 1222.3,775.82 1223.1,776.43 1223.9,776.35 1224.7,775.83 1225.5,775.05 1226.3,776.07 1227.1,775.54 1227.9,775.71 1228.7,775.86 1229.5,775.71 1230.3,775.46 1231.1,776.02 1231.9,775.24 1232.7,775.21 1233.5,775.82 1234.3,774.86 1235.1,774.96 1235.9,775.67 1236.7,774.56 1237.5,775.6 1238.3,775.36 1239.1,774.95 1239.9,774.71 1240.7,775.36 1241.5,775.5 1242.3,774.38 1243.1,774.81 1243.9,774.87 1244.7,774.76 1245.5,774.49 1246.3,774.2 1247.1,774.77 1247.9,775.04 1248.7,773.96 1249.5,774.15 1250.3,774.93 1251.1,774.85 1251.9,774.63 1252.7,773.7 1253.5,774.64 1254.3,774.96 1255.1,774.94 1255.9,774.49 1256.7,773.53 1257.5,774.6 1258.3,773.69 1259.1,774.25 1259.9,774.64 1260.7,774.26 1261.5,773.41 1262.3,773.59 1263.1,774.43 1263.9,773.31 1264.7,773.92 1265.5,773.6 1266.3,773.21 1267.1,773.82 1267.9,772.97 1268.7,773.02 1269.5,773.36 1270,772.9 1270.3,772.87 1271.1,773.56 1271.9,773.76 1272.7,773.91 1273.5,772.84 1274.3,773.22 1275.1,773.02 1275.9,773.39 1276.7,773.2 1277.5,773.79 1278.3,772.97 1279.1,772.49 1279.9,773.35 1280.7,772.55 1281.5,773.19 1282.3,772.98 1283.1,773.51 1283.9,772.98 1284.7,773.04 1285.5,772.5 1286.3,772.87 1287.1,772.42 1287.9,773.08 1288.7,772.72 1289.5,772.15 1290.3,772.26 1291.1,772.42 1291.9,772.89 1292.7,772.08 1293.5,772.79 1294.3,772.68 1295.1,771.84 1295.9,772.63 1296.7,771.78 1297.5,771.8 1298.3,772.42 1299.1,771.89 1299.9,772.75 1300.7,772.16 1301.5,771.9 1302.3,772.53 1303.1,771.42 1303.9,772.36 1304.7,771.39 1305.5,771.49 1306.3,772.58 1307.1,772.16 1307.9,771.49 1308.7,771.3 1309.5,772.47 1310.3,772 1311.1,772.19 1311.9,771.2 1312.7,771.84 1313.5,771.43 1314.3,771.23 1315.1,771.33 1315.9,771.69 1316.7,771.29 1317.5,771.3 1318.3,770.92 1319.1,771.86 1319.9,771.57 1320.7,771.75 1321.5,771.2 1322.3,771.75 1323.1,771.25 1323.9,771.32 1324.7,771.26 1325.5,771.46 1326.3,770.94 1327.1,770.49 1327.9,770.37 1328.7,770.57 1329.5,770.31 1330.3,771.46 1331.1,770.85 1331.9,771.21 1332.7,770.11 1333.5,770.74 1334.3,771.29 1335.1,770.88 1335.9,770.58 1336.7,770.59 1337.5,770.05 1338.3,770.09 1339.1,770.06 1339.9,770.33 1340,770.34 1340.7,771.01 1341.5,769.96 1342.3,770.08 1343.1,770.09 1343.9,769.9 1344.7,770.05 1345.5,769.95 1346.3,770.26 1347.1,769.61 1347.9,770.83 1348.7,770.03 1349.5,770.8 1350.3,770.42 1351.1,770.37 1351.9,770.06 1352.7,770.7 1353.5,769.52 1354.3,770.26 1355.1,769.7 1355.9,770.21 1356.7,770.26 1357.5,769.45 1358.3,769.47 1359.1,769.2 1359.9,769.46 1360.7,769.22 1361.5,769.64 1362.3,770.42 1363.1,769.54 1363.9,769.44 1364.7,769.63 1365.5,769.35 1366.3,769.95 1367.1,769.9 1367.9,769.1 1368.7,769.18 1369.5,769.76 1370.3,770.11 1371.1,769.67 1371.9,769.34 1372.7,770.08 1373.5,768.69 1374.3,768.74 1375.1,769.72 1375.9,769.18 1376.7,768.64 1377.5,769.32 1378.3,769.91 1379.1,769.22 1379.9,768.96 1380.7,768.57 1381.5,768.52 1382.3,769.65 1383.1,769.05 1383.9,769.65 1384.7,768.39 1385.5,768.62 1386.3,768.33 1387.1,768.79 1387.9,768.29 1388.7,768.53 1389.5,768.72 1390.3,768.55 1391.1,768.17 1391.9,768.12 1392.7,769.4 1393.5,768.27 1394.3,768.7 1395.1,768.53 1395.9,768.68 1396.7,768.03 1397.5,768.32 1398.3,768.01 1399.1,768.59 1399.9,769.09 1400,768.64 1400.7,768.98 1401.5,768.06 1402.3,767.76 1403.1,768.46 1403.9,768.37 1404.7,768.46 1405.5,768.16 1406.3,768.49 1407.1,768.61 1407.9,768.84 1408.7,767.97 1409.5,768.15 1410.3,768.65 1411.1,767.78 1411.9,767.61 1412.7,767.86 1413.5,767.52 1414.3,768.46 1415.1,768.5 1415.9,767.77 1416.7,767.49 1417.5,767.4 1418.3,767.6 1419.1,767.35 1419.9,767.81 1420.7,767.99 1421.5,767.51 1422.3,767.23 1423.1,768.1 1423.9,767.16 1424.7,767.35 1425.5,767.44 1426.3,767.54 1427.1,767.13 1427.9,767.56 1428.7,767.39 1429.5,767.98 1430.3,767.68 1431.1,768.13 1431.9,767.77 1432.7,767.89 1433.5,767.61 1434.3,767.4 1435.1,767.9 1435.9,767.65 1436.7,768.05 1437.5,767.71 1438.3,767.65 1439.1,767.02 1439.9,767.75 1440.7,767.13 1441.5,766.75 1442.3,766.64 1443.1,766.76 1443.9,766.87 1444.7,767.42 1445.5,766.85 1446.3,766.52 1447.1,767.47 1447.9,767.16 1448.7,766.4 1449.5,766.4 1450.3,766.49 1451.1,766.79 1451.9,767.47 1452.7,767.57 1453.5,767.07 1454.3,766.51 1455.1,766.77 1455.9,766.65 1456.7,766.58 1457.5,766.11 1458.3,766.89 1459.1,767.21 1459.9,767.04 1460.7,766.13 1461.5,766.72 1462.3,766.19 1463.1,766.92 1463.9,766.53 1464.7,767.2 1465.5,766.97 1466.3,766 1467.1,766.26 1467.5,767.08 1467.9,766.43 1468.7,766.37 1469.5,766.35 1470.3,766.78 1471.1,766.99 1471.9,766.4 1472.7,766.98 1473.5,766.43 1474.3,765.72 1475.1,766.68 1475.9,766.1 1476.7,765.56 1477.5,766.83 1478.3,765.48 1479.1,766.22 1479.9,766.06 1480.7,766.59 1481.5,765.88 1482.3,765.6 1483.1,765.66 1483.9,765.53 1484.7,766.01 1485.5,765.69 1486.3,766.22 1487.1,765.48 1487.9,765.61 1488.7,765.43 1489.5,766.43 1490.3,766.21 1491.1,766.2 1491.9,765.84 1492.7,765.51 1493.5,765.13 1494.3,766.06 1495.1,765.56 1495.9,764.9 1496.7,765.05 1497.5,764.93 1498.3,765.77 1499.1,766 1499.9,764.99 1500.7,765.8 1501.5,765.11 1502.3,765.58 1503.1,765.81 1503.9,765.45 1504.7,765.67 1505.5,765.05 1506.3,764.51 1507.1,765.18 1507.9,765.26 1508.7,764.67 1509.5,764.93 1510.3,764.8 1511.1,764.37 1511.9,764.74 1512.7,764.81 1513.5,764.92 1514.3,765.21 1515.1,764.76 1515.9,765.55 1516.7,765.29 1517.5,765.41 1518,765.07 1518.3,765.31 1519.1,765.85 1519.9,766.95 1520.7,767.21 1521.5,768.03 1522.3,768.79 1523.1,769.46 1523.9,770.09 1524.7,770.74 1525.5,771.47 1526.3,772.3 1527,773.03 1527.1,773.24 1527.9,774.29 1528.7,775.19 1529.5,776.51 1530.3,777.31 1531.1,778.55 1531.9,779.36 1532.7,780.7 1533,781.07 1533.5,782.52 1534.3,784.63 1535.1,786.68 1535.9,788.87 1536,789.1 1536.7,787.88 1537.5,786.38 1538.3,785.17 1539,784.16 1539.1,783.1 1539.9,776.99 1540,776.02 1540.7,764.76 1541,759.8 1541.5,753.96 1542,747.87 1542.3,731.26 1542.5,720.16" fill="none" stroke="#a818b8" stroke-width="1.4" stroke-linejoin="round" />
<polygon points="1010,748.9 1010.5,751.84 1011,754.13 1011.5,754.54 1012,756.06 1012.5,755.76 1013,754.35 1013.5,754.23 1014,754.42 1014.5,754.46 1015,755.71 1015.5,756.88 1016,759.62 1016.5,756.71 1017,756.61 1017.5,754.04 1018,751.92 1018.5,754.65 1019,755.59 1019.5,755.75 1020,757.52 1020.5,757.04 1021,758.41 1021.5,757.11 1022,756.97 1022.5,756.22 1023,757.57 1023.5,759.68 1024,762.85 1024.5,764.72 1025,765.56 1025.5,766.95 1026,769.05 1026.5,769.1 1027,769.87 1027.5,770.64 1028,771.18 1028.5,770.68 1029,770.8 1029.5,771.24 1030,772.1 1030.5,772.21 1031,771.55 1031.5,771.8 1032,771.7 1032.5,771.05 1033,771.22 1033.5,771.46 1034,771.33 1034.5,771.51 1035,771.89 1035.5,772.66 1036,772.31 1036.5,773.64 1037,773.85 1037.5,773.82 1038,773.08 1038.5,773.11 1039,772.59 1039.5,772.85 1040,772.96 1040.5,773.68 1041,775.61 1041.5,776.64 1042,778.46 1042.5,780.1 1043,781.51 1043,786.27 1042.5,784.22 1042,782.54 1041.5,780.33 1041,779.01 1040.5,779.01 1040,777.16 1039.5,777.1 1039,777.34 1038.5,778.31 1038,777.6 1037.5,777.75 1037,777.69 1036.5,777.64 1036,777.33 1035.5,776.55 1035,776.75 1034.5,775.35 1034,775.3 1033.5,774.72 1033,775.93 1032.5,775.42 1032,775.37 1031.5,776.39 1031,776.32 1030.5,776.93 1030,777.2 1029.5,776.77 1029,775.46 1028.5,775.22 1028,774.82 1027.5,775.16 1027,773.9 1026.5,773.35 1026,773.72 1025.5,771.02 1025,769.52 1024.5,769.17 1024,766.69 1023.5,765.09 1023,763.51 1022.5,763.41 1022,762.71 1021.5,763.3 1021,763.58 1020.5,764.97 1020,764.58 1019.5,762.97 1019,762.55 1018.5,760.75 1018,759.37 1017.5,760.28 1017,761.59 1016.5,763.58 1016,765.78 1015.5,763.61 1015,763.06 1014.5,760.98 1014,760.3 1013.5,761.05 1013,761.02 1012.5,762.29 1012,762.72 1011.5,761.37 1011,759.85 1010.5,757.72 1010,756.49" fill="#a818b8"/>
<polygon points="690.3,914 690.3,914 690.8,900 691,890 693,886 695,891 697,887 699,892 702,888 705,891 708,887 712,890 720,889.5 735,888.5 750,887 770,886 800,885 850,884.5 900,884 936,884.2 938,882 940,870 941,855 941.6,840 942,822 943.8,884 943.8,914" fill="#ecf6ec"/>
<polyline points="690.3,913.96 690.8,899.85 691,889.57 691.1,890.24 691.9,887.61 692.7,886.6 693,886.48 693.5,886.75 694.3,889.32 695,891.14 695.1,890.25 695.9,889.05 696.7,887.84 697,886.94 697.5,888.52 698.3,889.84 699,891.69 699.1,891.4 699.9,890.81 700.7,890.24 701.5,888.78 702,888.33 702.3,888.16 703.1,889.4 703.9,889.42 704.7,890.45 705,891.21 705.5,890.6 706.3,889.17 707.1,887.71 707.9,886.85 708,886.65 708.7,887.26 709.5,888.5 710.3,888.36 711.1,889.79 711.9,890.38 712,889.47 712.7,889.81 713.5,889.9 714.3,889.28 715.1,889.72 715.9,890.24 716.7,889.24 717.5,889.77 718.3,889.15 719.1,889.65 719.9,889.98 720,889.14 720.7,888.86 721.5,888.9 722.3,889.39 723.1,888.71 723.9,888.74 724.7,889.18 725.5,889.64 726.3,888.98 727.1,888.9 727.9,889.14 728.7,888.43 729.5,888.96 730.3,888.42 731.1,888.89 731.9,889.26 732.7,888.12 733.5,888.67 734.3,888.67 735,888.08 735.1,888.21 735.9,889 736.7,888.93 737.5,887.8 738.3,888.42 739.1,888.63 739.9,887.69 740.7,888.06 741.5,887.3 742.3,887.61 743.1,887.9 743.9,887.72 744.7,887.86 745.5,886.95 746.3,887.19 747.1,887.73 747.9,887.31 748.7,887.07 749.5,886.93 750,887.58 750.3,887.07 751.1,886.37 751.9,887.26 752.7,886.66 753.5,886.75 754.3,886.44 755.1,886.68 755.9,886.49 756.7,886.17 757.5,886.78 758.3,886.11 759.1,886.89 759.9,885.94 760.7,886.8 761.5,886.79 762.3,886.38 763.1,886.6 763.9,886 764.7,886.55 765.5,886.14 766.3,885.86 767.1,886.7 767.9,885.99 768.7,885.91 769.5,886.46 770,885.84 770.3,886.19 771.1,885.57 771.9,886.35 772.7,885.62 773.5,885.34 774.3,886.43 775.1,885.44 775.9,886.34 776.7,886.36 777.5,885.88 778.3,885.14 779.1,885.17 779.9,885.32 780.7,885.51 781.5,885.75 782.3,886.15 783.1,885.39 783.9,885.11 784.7,885.58 785.5,885.05 786.3,884.96 787.1,885.5 787.9,885.64 788.7,884.86 789.5,885.29 790.3,885.57 791.1,885.61 791.9,885.13 792.7,885.71 793.5,884.82 794.3,885.45 795.1,885.49 795.9,885.59 796.7,885.1 797.5,884.6 798.3,884.51 799.1,885.06 799.9,884.61 800,885.16 800.7,884.49 801.5,885.32 802.3,884.64 803.1,884.38 803.9,884.57 804.7,884.9 805.5,885.02 806.3,884.8 807.1,884.54 807.9,884.9 808.7,885.45 809.5,884.95 810.3,885.43 811.1,884.32 811.9,885.47 812.7,885.34 813.5,884.92 814.3,884.89 815.1,884.89 815.9,885.33 816.7,884.31 817.5,885 818.3,884.87 819.1,884.57 819.9,885.07 820.7,885.06 821.5,884.31 822.3,885.02 823.1,884.71 823.9,884.75 824.7,884.92 825.5,884.21 826.3,884.86 827.1,884.58 827.9,885.18 828.7,884.39 829.5,885.09 830.3,884.97 831.1,884.84 831.9,885.13 832.7,884.12 833.5,884.78 834.3,884.79 835.1,884.86 835.9,884.53 836.7,884.12 837.5,884.25 838.3,884.75 839.1,884.23 839.9,884.08 840.7,884.42 841.5,884.55 842.3,884.62 843.1,884 843.9,884.89 844.7,884.35 845.5,884.88 846.3,883.95 847.1,885.07 847.9,884.63 848.7,885.08 849.5,885.09 850,884.9 850.3,884.02 851.1,884.31 851.9,884.16 852.7,884.81 853.5,884.1 854.3,884.12 855.1,883.98 855.9,883.99 856.7,884.96 857.5,885 858.3,884.26 859.1,884.7 859.9,884.36 860.7,884.42 861.5,884.23 862.3,884.54 863.1,884.05 863.9,884.07 864.7,884.37 865.5,883.98 866.3,884.26 867.1,884.86 867.9,883.75 868.7,883.84 869.5,884.66 870.3,883.77 871.1,883.99 871.9,884.7 872.7,884.4 873.5,883.93 874.3,883.73 875.1,883.98 875.9,884 876.7,884.59 877.5,884.8 878.3,884.56 879.1,884.69 879.9,884.72 880.7,884.64 881.5,884.69 882.3,884.74 883.1,883.68 883.9,883.94 884.7,883.85 885.5,884.27 886.3,884.13 887.1,883.95 887.9,884.53 888.7,883.99 889.5,883.76 890.3,883.83 891.1,884.04 891.9,884.21 892.7,884.16 893.5,883.99 894.3,883.68 895.1,883.93 895.9,883.83 896.7,883.64 897.5,884.08 898.3,883.64 899.1,884.26 899.9,884.19 900,883.57 900.7,884.15 901.5,883.81 902.3,883.95 903.1,884.15 903.9,884.34 904.7,884.49 905.5,884.31 906.3,883.69 907.1,884.09 907.9,883.85 908.7,883.47 909.5,884.12 910.3,884.02 911.1,884.5 911.9,883.85 912.7,884.47 913.5,884.09 914.3,883.6 915.1,884.34 915.9,883.83 916.7,884.13 917.5,883.58 918.3,883.51 919.1,884.61 919.9,883.56 920.7,883.69 921.5,883.72 922.3,883.64 923.1,884.52 923.9,884.73 924.7,884.32 925.5,884.02 926.3,884.61 927.1,884.16 927.9,883.72 928.7,884.39 929.5,883.99 930.3,883.89 931.1,883.96 931.9,884.04 932.7,883.8 933.5,884.32 934.3,884.63 935.1,884.28 935.9,883.61 936,884.27 936.7,883.24 937.5,882.54 938,882.15 938.3,880.27 939.1,875.56 939.9,870.7 940,869.91 940.7,859.36 941,854.98 941.5,842.57 941.6,839.89 942,821.93" fill="none" stroke="#118a11" stroke-width="1.4" stroke-linejoin="round" />
<polygon points="691,886.85 691.5,885.47 692,885.24 692.5,882.25 693,881.61 693.5,883.39 694,885.5 694.5,886.65 695,886.46 695.5,885.53 696,885.67 696.5,883.69 697,882.34 697.5,884.23 698,885.72 698.5,887.04 699,887.21 699.5,887.45 700,885.94 700.5,885.34 701,885.54 701.5,884.67 702,885.02 702.5,884 703,886.29 703.5,886.24 704,886.3 704.5,885.57 705,887.43 705.5,886.25 706,887.16 706.5,886.55 707,884.89 707.5,885.66 708,883.79 708.5,885.07 709,885.55 709.5,886.15 710,885.07 710.5,885.72 711,887.32 711.5,886.07 712,887.4 712.5,887.01 713,887.54 713.5,887.25 714,887.32 714.5,887.38 715,887.84 715.5,886.54 716,887.35 716.5,886.14 717,887.43 717.5,887.66 718,886.57 718.5,887.62 719,887.24 719.5,887.42 720,886.28 720.5,885.88 721,887.12 721.5,887.44 722,887.04 722.5,886.01 723,887.35 723.5,886.95 724,886.94 724.5,887.06 725,885.68 725.5,885.54 726,885.66 726.5,885.81 727,886.29 727.5,886.74 728,885.53 728.5,886.46 729,885.63 729.5,885.57 730,885.81 730.5,886.44 731,885.23 731.5,885.17 732,885.66 732.5,885.23 733,885.08 733.5,886.6 734,885.58 734.5,885.36 735,887.18 735.5,886.44 736,886.43 736.5,886.45 737,886.33 737.5,886.28 738,886.44 738.5,886.17 739,886.53 739.5,886.92 740,886.31 740.5,885.99 741,886.66 741.5,885.99 742,886.69 742.5,885.83 743,886.06 743.5,885.77 744,886.27 744.5,885.49 745,886.29 745.5,885.47 746,885.87 746.5,885.48 747,885.33 747.5,885.85 748,885.68 748.5,885.88 749,885.83 749.5,885.46 750,885.36 750.5,885.17 751,885.54 751.5,885.34 752,885.32 752,888.07 751.5,888.73 751,888.59 750.5,888.08 750,889 749.5,888.49 749,888.35 748.5,889.12 748,889.09 747.5,889.18 747,888.59 746.5,888.52 746,889.35 745.5,889.06 745,889.21 744.5,888.74 744,889.18 743.5,889.06 743,889.18 742.5,888.93 742,889.73 741.5,889.47 741,889.36 740.5,889.65 740,889.58 739.5,889.18 739,889.72 738.5,890.02 738,889.63 737.5,889.55 737,889.95 736.5,890.23 736,889.61 735.5,889.56 735,889.6 734.5,892.02 734,891.44 733.5,890.79 733,891.67 732.5,890.78 732,890.68 731.5,892.28 731,890.79 730.5,892.28 730,891.91 729.5,891.67 729,891.9 728.5,891.96 728,892.45 727.5,892.39 727,891.09 726.5,892.24 726,892.12 725.5,891.72 725,892.03 724.5,891.19 724,892.62 723.5,891.52 723,891.64 722.5,892.09 722,892.79 721.5,892.02 721,892.04 720.5,892.18 720,892.1 719.5,892.34 719,893.17 718.5,892.33 718,891.78 717.5,891.84 717,891.69 716.5,892.34 716,891.82 715.5,892.3 715,892 714.5,891.76 714,893.42 713.5,892.04 713,892.16 712.5,893.27 712,893.51 711.5,892.85 711,891.64 710.5,892.42 710,892.03 709.5,891.22 709,890.43 708.5,889.84 708,889.95 707.5,889.96 707,890.41 706.5,891.86 706,892.84 705.5,893.58 705,894.07 704.5,893.56 704,893.4 703.5,893.35 703,893.07 702.5,891.2 702,891.31 701.5,892.28 701,892.9 700.5,894.58 700,894.61 699.5,894.64 699,896.63 698.5,893.56 698,892.52 697.5,892.42 697,889.8 696.5,892.6 696,893.07 695.5,893.05 695,895.49 694.5,894.52 694,891.35 693.5,890.5 693,889.12 692.5,891.47 692,891.54 691.5,891.96 691,892.84" fill="#118a11"/>
<rect x="1467" y="721" width="1" height="193" fill="#000" />
<rect x="644" y="764" width="9" height="2" fill="#b018c0" />
<path d="M644.5,769 L652.5,773.5 L644.5,778 Z" fill="#d010d8" stroke="#000" stroke-width="1"/>
<text x="659.5" y="777" fill="#000" font-size="9.5" text-anchor="start" >1.236</text>
<path d="M644.5,880.5 L652.5,885 L644.5,889.5 Z" fill="#1a9a1a" stroke="#000" stroke-width="1"/>
<path d="M1045,814.5 L1054,814.5 L1049.5,822 Z" fill="#c010c8" stroke="#000" stroke-width="0.8"/>
<text x="1057.5" y="820.5" fill="#000" font-size="9.5" text-anchor="start" >1.049</text>
<path d="M1542,718 L1551,718 L1546.5,710.5 Z" fill="#c010c8" stroke="#000" stroke-width="0.8"/>
<text x="1554" y="718.5" fill="#000" font-size="9.5" text-anchor="start" >2.818</text>
<rect x="654" y="924" width="997" height="1.5" fill="#000" />
<rect x="667" y="925" width="1" height="4" fill="#000" />
<rect x="686" y="925" width="1" height="4" fill="#000" />
<rect x="705" y="925" width="1" height="4" fill="#000" />
<rect x="724" y="925" width="1" height="4" fill="#000" />
<rect x="743" y="925" width="1" height="9" fill="#000" />
<text x="743.3" y="945.5" fill="#000" font-size="12.5" text-anchor="middle" >16:38:10.000</text>
<rect x="762" y="925" width="1" height="4" fill="#000" />
<rect x="781" y="925" width="1" height="4" fill="#000" />
<rect x="800" y="925" width="1" height="4" fill="#000" />
<rect x="819" y="925" width="1" height="4" fill="#000" />
<rect x="838" y="925" width="1" height="9" fill="#000" />
<text x="838.15" y="945.5" fill="#000" font-size="12.5" text-anchor="middle" >16:38:15.000</text>
<rect x="857" y="925" width="1" height="4" fill="#000" />
<rect x="876" y="925" width="1" height="4" fill="#000" />
<rect x="895" y="925" width="1" height="4" fill="#000" />
<rect x="914" y="925" width="1" height="4" fill="#000" />
<rect x="932" y="925" width="1" height="9" fill="#000" />
<text x="933" y="945.5" fill="#000" font-size="12.5" text-anchor="middle" >16:38:20.000</text>
<rect x="951" y="925" width="1" height="4" fill="#000" />
<rect x="970" y="925" width="1" height="4" fill="#000" />
<rect x="989" y="925" width="1" height="4" fill="#000" />
<rect x="1008" y="925" width="1" height="4" fill="#000" />
<rect x="1027" y="925" width="1" height="9" fill="#000" />
<text x="1027.85" y="945.5" fill="#000" font-size="12.5" text-anchor="middle" >16:38:25.000</text>
<rect x="1046" y="925" width="1" height="4" fill="#000" />
<rect x="1065" y="925" width="1" height="4" fill="#000" />
<rect x="1084" y="925" width="1" height="4" fill="#000" />
<rect x="1103" y="925" width="1" height="4" fill="#000" />
<rect x="1122" y="925" width="1" height="9" fill="#000" />
<text x="1122.7" y="945.5" fill="#000" font-size="12.5" text-anchor="middle" >16:38:30.000</text>
<rect x="1141" y="925" width="1" height="4" fill="#000" />
<rect x="1160" y="925" width="1" height="4" fill="#000" />
<rect x="1179" y="925" width="1" height="4" fill="#000" />
<rect x="1198" y="925" width="1" height="4" fill="#000" />
<rect x="1217" y="925" width="1" height="9" fill="#000" />
<text x="1217.55" y="945.5" fill="#000" font-size="12.5" text-anchor="middle" >16:38:35.000</text>
<rect x="1236" y="925" width="1" height="4" fill="#000" />
<rect x="1255" y="925" width="1" height="4" fill="#000" />
<rect x="1274" y="925" width="1" height="4" fill="#000" />
<rect x="1293" y="925" width="1" height="4" fill="#000" />
<rect x="1312" y="925" width="1" height="9" fill="#000" />
<text x="1312.4" y="945.5" fill="#000" font-size="12.5" text-anchor="middle" >16:38:40.000</text>
<rect x="1331" y="925" width="1" height="4" fill="#000" />
<rect x="1350" y="925" width="1" height="4" fill="#000" />
<rect x="1369" y="925" width="1" height="4" fill="#000" />
<rect x="1388" y="925" width="1" height="4" fill="#000" />
<rect x="1407" y="925" width="1" height="9" fill="#000" />
<text x="1407.25" y="945.5" fill="#000" font-size="12.5" text-anchor="middle" >16:38:45.000</text>
<rect x="1426" y="925" width="1" height="4" fill="#000" />
<rect x="1445" y="925" width="1" height="4" fill="#000" />
<rect x="1464" y="925" width="1" height="4" fill="#000" />
<rect x="1483" y="925" width="1" height="4" fill="#000" />
<rect x="1502" y="925" width="1" height="9" fill="#000" />
<text x="1502.1" y="945.5" fill="#000" font-size="12.5" text-anchor="middle" >16:38:50.000</text>
<rect x="1521" y="925" width="1" height="4" fill="#000" />
<rect x="1540" y="925" width="1" height="4" fill="#000" />
<rect x="1559" y="925" width="1" height="4" fill="#000" />
<rect x="1577" y="925" width="1" height="4" fill="#000" />
<rect x="1596" y="925" width="1" height="9" fill="#000" />
<text x="1596.95" y="945.5" fill="#000" font-size="12.5" text-anchor="middle" >16:38:55.000</text>
<rect x="1615" y="925" width="1" height="4" fill="#000" />
<rect x="1634" y="925" width="1" height="4" fill="#000" />
<rect x="1467" y="925" width="1" height="9" fill="#000" />
<text x="579.5" y="936" fill="#000" font-size="12" text-anchor="start" >Time</text>
<text x="579.5" y="949.5" fill="#000" font-size="12" text-anchor="start" >(s)</text>
<rect x="654" y="951" width="997" height="13" fill="#dde9f9" />
<path d="M656,957.5 L664,953 L664,962 Z" fill="#5b8fd6"/>
<path d="M1649,957.5 L1641,953 L1641,962 Z" fill="#5b8fd6"/>
<defs><linearGradient id="thumbg" x1="0" y1="0" x2="0" y2="1"><stop offset="0" stop-color="#cfe2fc"/><stop offset="1" stop-color="#97c1f7"/></linearGradient></defs>
<rect x="1186.5" y="952.5" width="140" height="10" fill="url(#thumbg)" stroke="#7d9fd4" stroke-width="1"/>
<defs><linearGradient id="selb" x1="0" y1="0" x2="0" y2="1"><stop offset="0" stop-color="#cfe3fc"/><stop offset="1" stop-color="#a3cbf8"/></linearGradient><linearGradient id="selo" x1="0" y1="0" x2="0" y2="1"><stop offset="0" stop-color="#fdf1cc"/><stop offset="1" stop-color="#fed67a"/></linearGradient></defs>
<rect x="1674.5" y="56.5" width="234" height="333" fill="#fff" stroke="#c4c4c4" stroke-width="1"/>
<rect x="1675" y="72" width="233" height="1" fill="#cbcbcb" />
<rect x="1676.5" y="58.5" width="12" height="12" fill="#808080" stroke="#000" stroke-width="1"/>
<text x="1693" y="68.8" fill="#000" font-size="12" text-anchor="start" >bap</text>
<text x="1904.5" y="68.8" fill="#000" font-size="12" text-anchor="end" >1019</text>
<rect x="1675" y="88" width="233" height="1" fill="#cbcbcb" />
<rect x="1676.5" y="74.5" width="12" height="12" fill="#0a46d2" stroke="#000" stroke-width="1"/>
<text x="1693" y="84.8" fill="#000" font-size="12" text-anchor="start" >fp1</text>
<text x="1904.5" y="84.8" fill="#000" font-size="12" text-anchor="end" >7891</text>
<rect x="1674.5" y="88.5" width="234" height="16" fill="url(#selb)" stroke="#7fa3d2" stroke-width="1"/>
<rect x="1676.5" y="90.5" width="12" height="12" fill="#00aa00" stroke="#000" stroke-width="1"/>
<text x="1693" y="100.8" fill="#000" font-size="12" text-anchor="start" >map1</text>
<text x="1904.5" y="100.8" fill="#000" font-size="12" text-anchor="end" >4000</text>
<rect x="1675" y="120" width="233" height="1" fill="#cbcbcb" />
<rect x="1676.5" y="106.5" width="12" height="12" fill="#fff" stroke="#7a1a1a" stroke-width="1"/>
<text x="1693" y="116.8" fill="#000" font-size="12" text-anchor="start" >rpm</text>
<text x="1904.5" y="116.8" fill="#000" font-size="12" text-anchor="end" >0</text>
<rect x="1675" y="136" width="233" height="1" fill="#cbcbcb" />
<rect x="1676.5" y="122.5" width="12" height="12" fill="#fff" stroke="#d6c4ee" stroke-width="1"/>
<text x="1693" y="132.8" fill="#000" font-size="12" text-anchor="start" >tps1</text>
<text x="1904.5" y="132.8" fill="#000" font-size="12" text-anchor="end" >10.1</text>
<rect x="1675" y="152" width="233" height="1" fill="#cbcbcb" />
<rect x="1676.5" y="138.5" width="12" height="12" fill="#fff" stroke="#b41a3a" stroke-width="1"/>
<text x="1693" y="148.8" fill="#000" font-size="12" text-anchor="start" >vehicleSpeed</text>
<text x="1904.5" y="148.8" fill="#000" font-size="12" text-anchor="end" >0.0</text>
<rect x="1675" y="56" width="233" height="1" fill="#c4c4c4" />
<rect x="1674.5" y="416.5" width="234" height="127" fill="#fff" stroke="#c4c4c4" stroke-width="1"/>
<rect x="1674.5" y="416.5" width="234" height="16" fill="url(#selb)" stroke="#7fa3d2" stroke-width="1"/>
<rect x="1676.5" y="418.5" width="12" height="12" fill="#e0102e" stroke="#000" stroke-width="1"/>
<text x="1693" y="428.8" fill="#000" font-size="12" text-anchor="start" >BOOST</text>
<text x="1904.5" y="428.8" fill="#000" font-size="12" text-anchor="end" >43.24</text>
<rect x="1674.5" y="570.5" width="234" height="124" fill="#fff" stroke="#c4c4c4" stroke-width="1"/>
<rect x="1675" y="586" width="233" height="1" fill="#cbcbcb" />
<rect x="1676.5" y="572.5" width="12" height="12" fill="#d0d0d0" stroke="#000" stroke-width="1"/>
<text x="1693" y="582.8" fill="#000" font-size="12" text-anchor="start" >RelFp1deviation</text>
<text x="1904.5" y="582.8" fill="#000" font-size="12" text-anchor="end" >22.8</text>
<rect x="1674.5" y="586.5" width="234" height="16" fill="url(#selo)" stroke="#e6bf86" stroke-width="1"/>
<rect x="1676.5" y="588.5" width="12" height="12" fill="#5a5a5a" stroke="#000" stroke-width="1"/>
<text x="1693" y="598.8" fill="#000" font-size="12" text-anchor="start" >relFp1</text>
<text x="1904.5" y="598.8" fill="#000" font-size="12" text-anchor="end" >4910</text>
<rect x="1674.5" y="720.5" width="234" height="193" fill="#fff" stroke="#c4c4c4" stroke-width="1"/>
<rect x="1674.5" y="720.5" width="234" height="16" fill="url(#selb)" stroke="#7fa3d2" stroke-width="1"/>
<rect x="1676.5" y="722.5" width="12" height="12" fill="#d000cc" stroke="#000" stroke-width="1"/>
<text x="1693" y="732.8" fill="#000" font-size="12" text-anchor="start" >Base FP Rise Rate</text>
<text x="1904.5" y="732.8" fill="#000" font-size="12" text-anchor="end" >1.305</text>
<rect x="1675" y="752" width="233" height="1" fill="#cbcbcb" />
<rect x="1676.5" y="738.5" width="12" height="12" fill="#008a00" stroke="#000" stroke-width="1"/>
<text x="1693" y="748.8" fill="#000" font-size="12" text-anchor="start" >Base FP Rise Rate Vac</text>
<text x="1904.5" y="748.8" fill="#000" font-size="12" text-anchor="end" >######</text>
<text x="9" y="999.5" fill="#1f921f" font-size="12" textLength="400.7" lengthAdjust="spacingAndGlyphs">.\DownloadedData\RICESP\Sytec FPR testing\donmega bolt test runs.SD</text>
<text x="9" y="1013.5" fill="#1f921f" font-size="12" textLength="497.8" lengthAdjust="spacingAndGlyphs">S8(11582) Cal(RICESP-RR172-TESTING-11582-Sytec SBV) Cfg() Boot(1.71) Main(1.690.1)</text>
<text x="9" y="1027.5" fill="#1f921f" font-size="12" textLength="317.7" lengthAdjust="spacingAndGlyphs">DateTime(2021\3\19 16:34) UncompressedSize(12.3 MB)</text>
<text x="9" y="1041.5" fill="#8a8a8a" font-size="12" textLength="267.7" lengthAdjust="spacingAndGlyphs">3 x runs on donmega proper machined steel bolt</text>
<rect x="1119" y="988" width="13" height="81" fill="#dde9f9" />
<path d="M1125.5,990.5 L1130,997 L1121,997 Z" fill="#5b8fd6"/>
<path d="M1125.5,1066.5 L1130,1060 L1121,1060 Z" fill="#5b8fd6"/>
<rect x="1120.5" y="1001.5" width="10" height="44" fill="url(#thumbv)" stroke="#7d9fd4" stroke-width="1"/>
<defs><linearGradient id="thumbv" x1="0" y1="0" x2="1" y2="0"><stop offset="0" stop-color="#cfe2fc"/><stop offset="1" stop-color="#97c1f7"/></linearGradient><clipPath id="infoclip"><rect x="1132" y="985" width="520" height="84"/></clipPath></defs>
<g clip-path="url(#infoclip)">
<text x="1132" y="1000" fill="#e28a2c" font-size="12" textLength="171.3" lengthAdjust="spacingAndGlyphs">relFp1 (100Hz) samples(36042)</text>
<text x="1132" y="1014" fill="#e28a2c" font-size="12" textLength="115.7" lengthAdjust="spacingAndGlyphs">Unit(Pressure,Millibar)</text>
<text x="1132" y="1028" fill="#e28a2c" font-size="12" textLength="316.5" lengthAdjust="spacingAndGlyphs">convert using y=(1*x)+0 to Millibar in the range 0..10000</text>
<text x="1132" y="1042" fill="#e28a2c" font-size="12" textLength="136.8" lengthAdjust="spacingAndGlyphs">UnitGroup(Fuel Pressure)</text>
<text x="1146" y="1056" fill="#e28a2c" font-size="12" textLength="400.3" lengthAdjust="spacingAndGlyphs">fp1, relFp1, fp2, relFp2, relFpMax, relFpMin, fpMin, fpp, fuelPump1FppErr,</text>
<text x="1146" y="1070" fill="#e28a2c" font-size="12" textLength="102.5" lengthAdjust="spacingAndGlyphs">fuelPump1FppTarg</text>
</g>
<rect x="1666" y="988" width="1" height="81" fill="#bdbdbd" />
<text x="1674" y="999.5" fill="#000" font-size="12" textLength="85.3" lengthAdjust="spacingAndGlyphs">Burst Log Mode</text>
<text x="1674" y="1027.5" fill="#000" font-size="12" textLength="97.4" lengthAdjust="spacingAndGlyphs">BASE, ENHANCED</text>
</svg>
</body></html>
